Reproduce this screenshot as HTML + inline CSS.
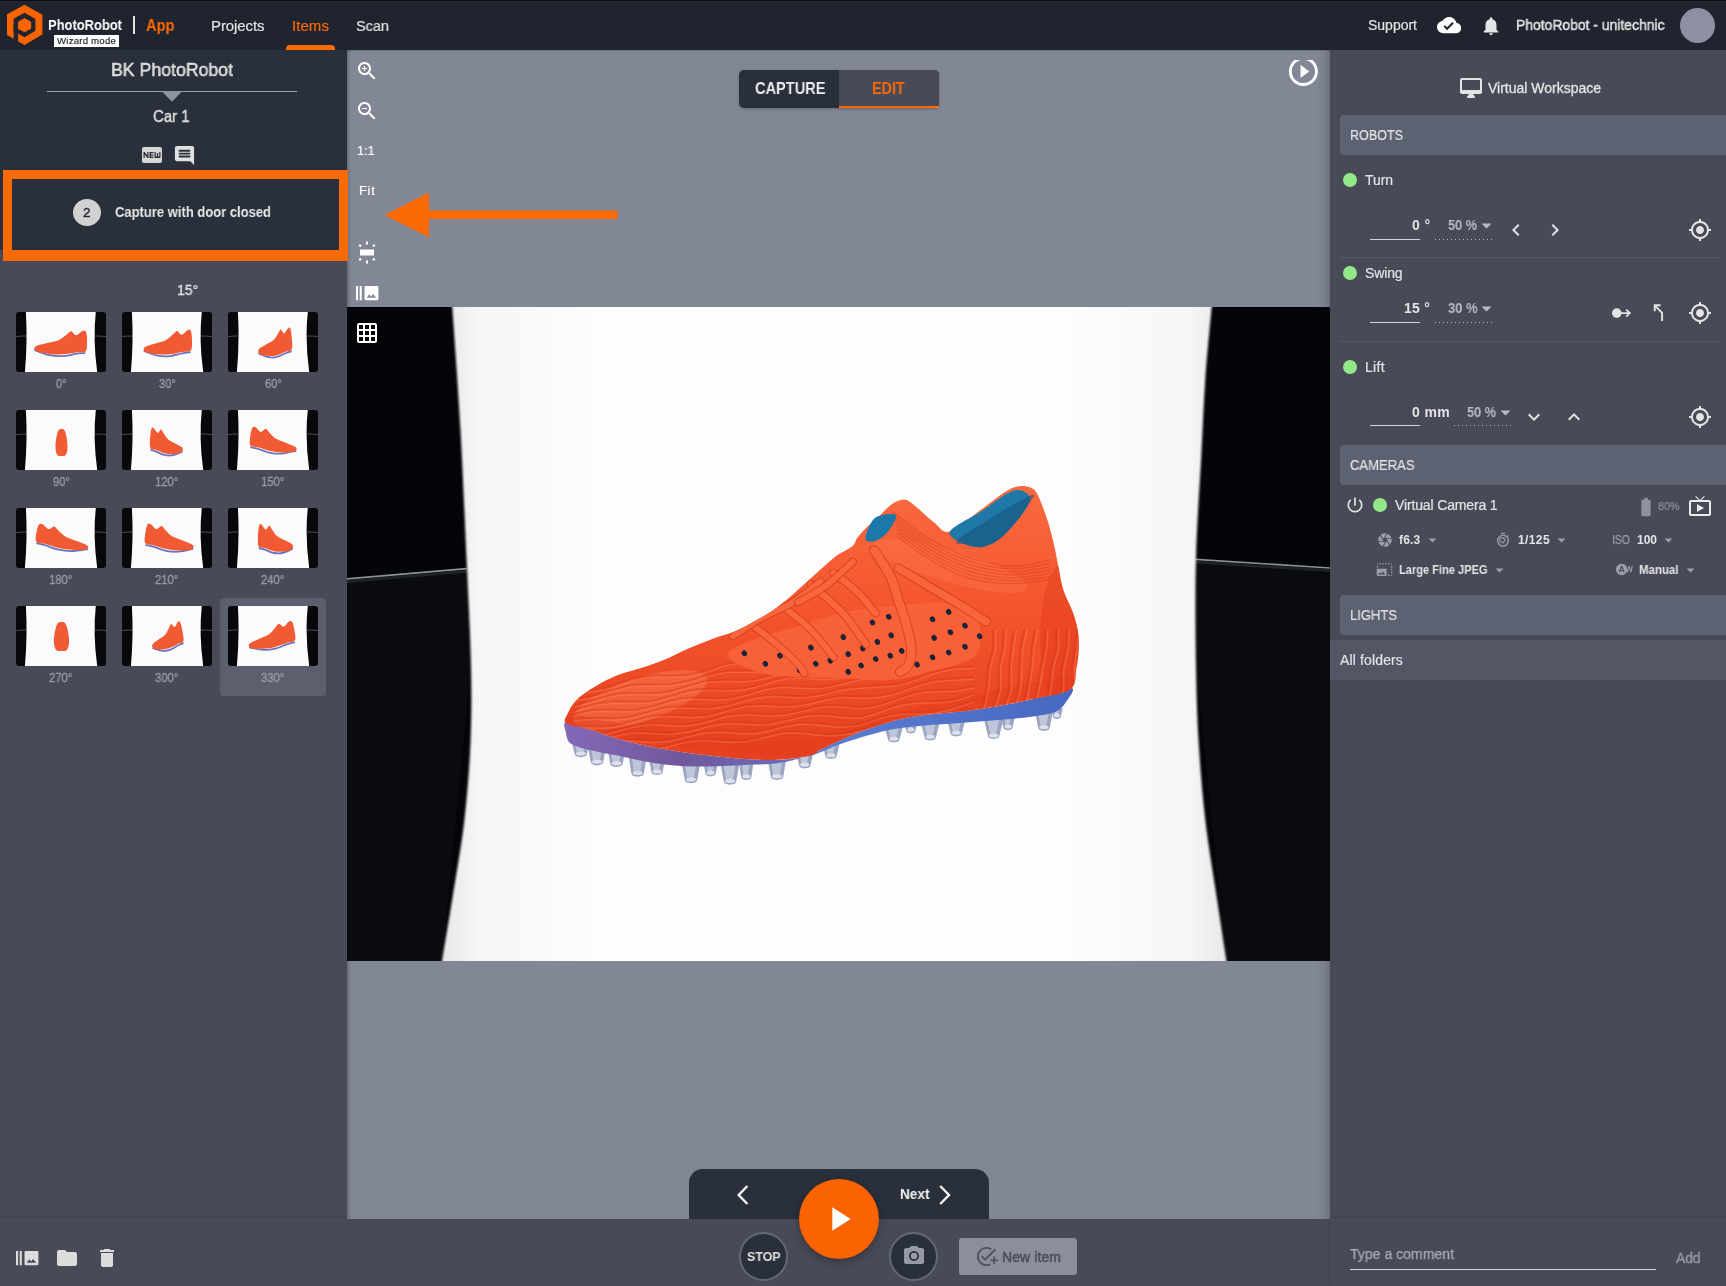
<!DOCTYPE html>
<html lang="en"><head><meta charset="utf-8"><title>PhotoRobot App - Wizard mode</title>
<style>
*{box-sizing:border-box;margin:0;padding:0}
html,body{width:1726px;height:1286px;overflow:hidden;background:#828796;font-family:"Liberation Sans",sans-serif}
body{position:relative}
.abs{position:absolute}
.t{position:absolute;white-space:nowrap;line-height:1;z-index:7;will-change:transform}
</style></head><body>
<!-- top navigation -->
<div class="abs" style="left:0;top:0;width:1726px;height:50px;background:#1f242e"></div>
<div class="abs" style="left:0;top:0;width:1726px;height:1px;background:#0b0d12"></div>
<svg class="abs" style="left:0;top:0" width="50" height="50" viewBox="0 0 50 50">
  <polygon fill="#fa6400" points="24.500,4.700 42.400,14.800 42.400,34.600 24.500,45.100 7,35 7,14.200"/>
  <polygon fill="#1f242e" points="24.500,12.800 35.400,19 35.400,30.700 24.500,37.300 13.600,31 13.600,18.700"/>
  <polygon fill="#1f242e" points="13.600,25 18.100,25 18.100,42.200 13.600,39.600"/>
  <polygon fill="#fa6400" points="24.500,17.900 31.100,21.800 31.100,28.800 24.500,32.300 18.100,29 18.100,21.800"/>
</svg>
<div class="abs" style="left:54px;top:35px;width:65px;height:12px;background:#fff"></div>
<div class="abs" style="left:133px;top:16px;width:2px;height:18px;background:#e4e4e4"></div>
<div class="abs" style="left:285.5px;top:45px;width:49px;height:5px;background:#ff6a00;border-radius:4px 4px 0 0"></div>
<svg class="abs" style="left:1436.90px;top:12.60px" width="24.2" height="24.2" viewBox="0 0 24 24" ><path fill="#ffffff" d="M19.35 10.04C18.67 6.59 15.64 4 12 4 9.11 4 6.6 5.64 5.35 8.04 2.34 8.36 0 10.91 0 14c0 3.31 2.69 6 6 6h13c2.76 0 5-2.24 5-5 0-2.64-2.05-4.78-4.65-4.96zM10 17l-3.5-3.5 1.41-1.41L10 14.17 15.18 9l1.41 1.41L10 17z"/></svg>
<svg class="abs" style="left:1479.50px;top:15.00px" width="22.0" height="22.0" viewBox="0 0 24 24" ><path fill="#e6e6e6" d="M12 22c1.1 0 2-.9 2-2h-4c0 1.1.89 2 2 2zm6-6v-5c0-3.07-1.64-5.64-4.5-6.32V4c0-.83-.67-1.5-1.5-1.5s-1.5.67-1.5 1.5v.68C7.63 5.36 6 7.92 6 11v5l-2 2v1h16v-1l-2-2z"/></svg>
<div class="abs" style="left:1679.500px;top:8px;width:35px;height:35px;border-radius:50%;background:#8d90a1"></div>

<!-- left panel -->
<div class="abs" style="left:0;top:50px;width:347px;height:1236px;background:#484a57"></div>
<div class="abs" style="left:0;top:50px;width:347px;height:200px;background:#2a303b"></div>
<div class="abs" style="left:47px;top:90.5px;width:250px;height:1.5px;background:#9ea3b0"></div>
<svg class="abs" style="left:160.800px;top:91px" width="22" height="12" viewBox="0 0 22 12"><polygon fill="#8e93a3" points="0.6,0 21.400,0 11,10.800"/></svg>
<svg class="abs" style="left:139.50px;top:143.00px" width="24.0" height="24.0" viewBox="0 0 24 24" ><path fill="#d8d8d8" d="M20 4H4c-1.110 0-1.990.89-1.990 2L2 18c0 1.110.89 2 2 2h16c1.110 0 2-.89 2-2V6c0-1.110-.89-2-2-2zM8.500 15H7.300l-2.550-3.500V15H3.500V9h1.250l2.500 3.500V9H8.500v6zm5-4.740H11v1.120h2.500v1.260H11v1.110h2.500V15h-4V9h4v1.260zm7 3.740c0 .55-.45 1-1 1h-4c-.55 0-1-.45-1-1V9h1.250v4.510h1.130V9.990h1.250v3.510h1.120V9h1.250v5z"/></svg>
<svg class="abs" style="left:172.50px;top:144.00px" width="23.0" height="23.0" viewBox="0 0 24 24" ><path fill="#e0e0e0" d="M21.990 4c0-1.100-.89-2-1.990-2H4c-1.100 0-2 .9-2 2v12c0 1.100.9 2 2 2h14l4 4-.010-18zM18 14H6v-2h12v2zm0-3H6V9h12v2zm0-3H6V6h12v2z"/></svg>
<!-- highlighted wizard step -->
<div class="abs" style="z-index:5;left:3.200px;top:169.500px;width:345px;height:91.900px;background:#2a303b;border:9.400px solid #fb6a05;border-top-width:9.300px;border-bottom-width:11.200px"></div>
<div class="abs" style="z-index:6;left:73px;top:198.500px;width:28px;height:27px;border-radius:50%;background:#d2d2d2"></div>
<!-- selected thumb highlight -->
<div class="abs" style="left:220px;top:598px;width:106px;height:98px;border-radius:4px;background:#5b5f6e"></div>
<svg class="abs" style="left:16px;top:312px;border-radius:3px" width="90" height="60" viewBox="0 0 90 60"><rect width="90" height="60" fill="#08080c"/><path fill="#fbfbfb" d="M9.900 0 Q11.600 30 8.900 60 L81.200 60 Q76.800 28 79.800 0Z"/><path d="M0 24.500 Q5 24 10.500 24 M79 24 Q85 24 90 24.500" stroke="#6a6d72" stroke-width=".7" fill="none"/><path d="M19.0 38.8C21.6 39.5 29.8 42.3 34.6 43.0C39.4 43.7 43.3 43.5 47.6 43.0C51.9 42.5 56.9 40.7 60.6 39.9C64.3 39.1 68.4 38.6 70.0 38.3" stroke="#6a74c0" stroke-width="1.800" fill="none" transform="rotate(4 45.0 30.0) translate(0 1)"/><path d="M19.0 38.8C18.6 37.9 18.8 36.8 20.6 35.7C22.3 34.7 25.8 33.8 29.4 32.6C33.0 31.4 38.9 30.2 42.4 28.4C45.9 26.7 48.2 23.8 50.2 22.2C52.2 20.6 52.8 18.6 54.4 18.6C55.9 18.6 57.7 22.4 59.6 22.2C61.5 22.0 64.2 18.1 65.8 17.5C67.4 16.9 68.6 16.7 69.4 18.6C70.3 20.4 70.9 25.5 71.0 28.7C71.1 31.9 71.7 36.0 70.0 37.8C68.2 39.6 64.3 38.6 60.6 39.4C56.9 40.1 51.9 41.7 47.6 42.2C43.3 42.8 38.7 42.9 34.6 42.7C30.5 42.6 25.8 42.1 23.2 41.4C20.6 40.8 19.4 39.8 19.0 38.8Z" fill="#f15a32" transform="rotate(4 45.0 30.0)"/></svg>
<svg class="abs" style="left:122px;top:312px;border-radius:3px" width="90" height="60" viewBox="0 0 90 60"><rect width="90" height="60" fill="#08080c"/><path fill="#fbfbfb" d="M9.900 0 Q11.600 30 8.900 60 L81.200 60 Q76.800 28 79.800 0Z"/><path d="M0 24.500 Q5 24 10.500 24 M79 24 Q85 24 90 24.500" stroke="#6a6d72" stroke-width=".7" fill="none"/><path d="M22.0 38.8C24.4 39.5 32.0 42.3 36.4 43.0C40.8 43.7 44.4 43.5 48.4 43.0C52.4 42.5 57.0 40.7 60.4 39.9C63.8 39.1 67.6 38.6 69.0 38.3" stroke="#6a74c0" stroke-width="1.800" fill="none" transform="rotate(2 46.0 30.0) translate(0 1)"/><path d="M22.0 38.8C21.6 37.9 21.8 36.8 23.4 35.7C25.0 34.7 28.2 33.8 31.6 32.6C35.0 31.4 40.4 30.2 43.6 28.4C46.8 26.7 49.0 23.8 50.8 22.2C52.6 20.6 53.2 18.6 54.6 18.6C56.1 18.6 57.7 22.4 59.4 22.2C61.2 22.0 63.7 18.1 65.2 17.5C66.7 16.9 67.8 16.7 68.6 18.6C69.4 20.4 69.9 25.5 70.0 28.7C70.1 31.9 70.6 36.0 69.0 37.8C67.4 39.6 63.8 38.6 60.4 39.4C57.0 40.1 52.4 41.7 48.4 42.2C44.4 42.8 40.2 42.9 36.4 42.7C32.6 42.6 28.2 42.1 25.8 41.4C23.4 40.8 22.4 39.8 22.0 38.8Z" fill="#f15a32" transform="rotate(2 46.0 30.0)"/></svg>
<svg class="abs" style="left:228px;top:312px;border-radius:3px" width="90" height="60" viewBox="0 0 90 60"><rect width="90" height="60" fill="#08080c"/><path fill="#fbfbfb" d="M9.900 0 Q11.600 30 8.900 60 L81.200 60 Q76.800 28 79.800 0Z"/><path d="M0 24.500 Q5 24 10.500 24 M79 24 Q85 24 90 24.500" stroke="#6a6d72" stroke-width=".7" fill="none"/><path d="M30.0 39.5C31.7 40.3 37.1 43.3 40.2 44.0C43.3 44.7 45.9 44.6 48.7 44.0C51.5 43.4 54.8 41.5 57.2 40.6C59.6 39.8 62.3 39.2 63.3 39.0" stroke="#6a74c0" stroke-width="1.800" fill="none" transform="rotate(-2 47.0 30.0) translate(0 1)"/><path d="M30.0 39.5C29.7 38.5 29.9 37.3 31.0 36.2C32.2 35.0 34.4 34.1 36.8 32.8C39.2 31.5 43.0 30.2 45.3 28.3C47.6 26.5 49.1 23.4 50.4 21.6C51.7 19.8 52.1 17.7 53.1 17.7C54.1 17.7 55.3 21.8 56.5 21.6C57.8 21.4 59.5 17.2 60.6 16.6C61.7 15.9 62.4 15.7 63.0 17.7C63.5 19.7 63.9 25.1 64.0 28.6C64.1 32.1 64.5 36.5 63.3 38.4C62.2 40.3 59.6 39.3 57.2 40.1C54.8 40.9 51.5 42.6 48.7 43.2C45.9 43.8 42.9 43.9 40.2 43.7C37.5 43.6 34.4 43.0 32.7 42.3C31.0 41.6 30.3 40.5 30.0 39.5Z" fill="#f15a32" transform="rotate(-2 47.0 30.0)"/></svg>
<svg class="abs" style="left:16px;top:410px;border-radius:3px" width="90" height="60" viewBox="0 0 90 60"><rect width="90" height="60" fill="#08080c"/><path fill="#fbfbfb" d="M9.900 0 Q11.600 30 8.900 60 L81.200 60 Q76.800 28 79.800 0Z"/><path d="M0 24.500 Q5 24 10.500 24 M79 24 Q85 24 90 24.500" stroke="#6a6d72" stroke-width=".7" fill="none"/><path d="M41.0 44.6C40.0 42.9 39.4 39.0 39.5 35.2C39.6 31.4 40.8 24.4 41.8 21.7C42.8 19.0 44.2 19.0 45.5 19.0C46.8 19.0 48.2 19.0 49.2 21.7C50.2 24.4 51.4 31.4 51.5 35.2C51.6 39.0 51.0 42.9 50.0 44.6C49.0 46.4 47.0 46.0 45.5 46.0C44.0 46.0 42.0 46.4 41.0 44.6Z" fill="#f15a32" transform="rotate(0 45.5 32.5)"/></svg>
<svg class="abs" style="left:122px;top:410px;border-radius:3px" width="90" height="60" viewBox="0 0 90 60"><rect width="90" height="60" fill="#08080c"/><path fill="#fbfbfb" d="M9.900 0 Q11.600 30 8.900 60 L81.200 60 Q76.800 28 79.800 0Z"/><path d="M0 24.500 Q5 24 10.500 24 M79 24 Q85 24 90 24.500" stroke="#6a6d72" stroke-width=".7" fill="none"/><path d="M61.0 39.8C59.4 40.5 54.1 43.3 51.1 44.0C48.1 44.7 45.6 44.5 42.8 44.0C40.1 43.5 37.0 41.7 34.6 40.9C32.2 40.1 29.7 39.6 28.7 39.3" stroke="#6a74c0" stroke-width="1.800" fill="none" transform="rotate(2 44.5 31.0) translate(0 1)"/><path d="M61.0 39.8C61.3 38.9 61.1 37.8 60.0 36.7C58.9 35.7 56.7 34.8 54.4 33.6C52.1 32.4 48.3 31.2 46.1 29.4C44.0 27.7 42.5 24.8 41.2 23.2C39.9 21.6 39.6 19.6 38.6 19.6C37.6 19.6 36.5 23.4 35.3 23.2C34.0 23.0 32.3 19.1 31.3 18.5C30.3 17.9 29.5 17.7 29.0 19.6C28.4 21.4 28.1 26.5 28.0 29.7C27.9 32.9 27.6 37.0 28.7 38.8C29.8 40.6 32.2 39.6 34.6 40.4C37.0 41.1 40.1 42.7 42.8 43.2C45.6 43.8 48.5 43.9 51.1 43.7C53.7 43.6 56.7 43.1 58.4 42.4C60.0 41.8 60.7 40.8 61.0 39.8Z" fill="#f15a32" transform="rotate(2 44.5 31.0)"/></svg>
<svg class="abs" style="left:228px;top:410px;border-radius:3px" width="90" height="60" viewBox="0 0 90 60"><rect width="90" height="60" fill="#08080c"/><path fill="#fbfbfb" d="M9.900 0 Q11.600 30 8.900 60 L81.200 60 Q76.800 28 79.800 0Z"/><path d="M0 24.500 Q5 24 10.500 24 M79 24 Q85 24 90 24.500" stroke="#6a6d72" stroke-width=".7" fill="none"/><path d="M69.0 38.2C66.7 38.8 59.2 41.4 54.9 42.0C50.6 42.6 47.1 42.5 43.1 42.0C39.2 41.5 34.8 39.8 31.4 39.1C28.0 38.4 24.3 37.9 22.9 37.7" stroke="#6a74c0" stroke-width="1.800" fill="none" transform="rotate(4 45.5 30.0) translate(0 1)"/><path d="M69.0 38.2C69.4 37.3 69.2 36.2 67.6 35.3C66.0 34.3 62.9 33.5 59.6 32.4C56.3 31.3 51.0 30.2 47.8 28.6C44.7 27.0 42.6 24.3 40.8 22.8C39.0 21.3 38.5 19.4 37.0 19.4C35.6 19.4 34.1 23.0 32.3 22.8C30.6 22.6 28.2 19.0 26.7 18.5C25.2 17.9 24.2 17.7 23.4 19.4C22.6 21.2 22.1 25.8 22.0 28.8C21.9 31.8 21.4 35.6 22.9 37.2C24.5 38.8 28.0 38.0 31.4 38.6C34.8 39.3 39.2 40.8 43.1 41.3C47.1 41.8 51.2 41.9 54.9 41.8C58.6 41.6 62.9 41.2 65.2 40.6C67.6 40.0 68.6 39.0 69.0 38.2Z" fill="#f15a32" transform="rotate(4 45.5 30.0)"/></svg>
<svg class="abs" style="left:16px;top:508px;border-radius:3px" width="90" height="60" viewBox="0 0 90 60"><rect width="90" height="60" fill="#08080c"/><path fill="#fbfbfb" d="M9.900 0 Q11.600 30 8.900 60 L81.200 60 Q76.800 28 79.800 0Z"/><path d="M0 24.500 Q5 24 10.500 24 M79 24 Q85 24 90 24.500" stroke="#6a6d72" stroke-width=".7" fill="none"/><path d="M73.0 37.3C70.3 37.9 62.0 40.4 57.1 41.0C52.2 41.6 48.3 41.5 43.8 41.0C39.4 40.5 34.4 38.9 30.6 38.2C26.8 37.5 22.7 37.1 21.1 36.9" stroke="#6a74c0" stroke-width="1.800" fill="none" transform="rotate(6 46.5 29.5) translate(0 1)"/><path d="M73.0 37.3C73.4 36.5 73.2 35.5 71.4 34.6C69.6 33.6 66.1 32.9 62.4 31.8C58.7 30.7 52.7 29.7 49.1 28.1C45.6 26.6 43.2 24.1 41.2 22.6C39.2 21.1 38.6 19.4 37.0 19.4C35.4 19.4 33.6 22.8 31.7 22.6C29.7 22.4 27.0 19.0 25.3 18.5C23.6 17.9 22.5 17.7 21.6 19.4C20.7 21.0 20.1 25.5 20.0 28.4C19.9 31.2 19.3 34.8 21.1 36.4C22.8 38.0 26.8 37.1 30.6 37.8C34.4 38.4 39.4 39.8 43.8 40.3C48.3 40.8 52.9 40.9 57.1 40.8C61.3 40.7 66.1 40.2 68.8 39.6C71.4 39.0 72.6 38.2 73.0 37.3Z" fill="#f15a32" transform="rotate(6 46.5 29.5)"/></svg>
<svg class="abs" style="left:122px;top:508px;border-radius:3px" width="90" height="60" viewBox="0 0 90 60"><rect width="90" height="60" fill="#08080c"/><path fill="#fbfbfb" d="M9.900 0 Q11.600 30 8.900 60 L81.200 60 Q76.800 28 79.800 0Z"/><path d="M0 24.500 Q5 24 10.500 24 M79 24 Q85 24 90 24.500" stroke="#6a6d72" stroke-width=".7" fill="none"/><path d="M72.0 38.0C69.5 38.7 61.8 41.3 57.3 42.0C52.8 42.7 49.1 42.5 45.0 42.0C41.0 41.5 36.3 39.8 32.8 39.0C29.3 38.2 25.5 37.8 24.0 37.5" stroke="#6a74c0" stroke-width="1.800" fill="none" transform="rotate(4 47.5 29.5) translate(0 1)"/><path d="M72.0 38.0C72.4 37.1 72.2 36.0 70.5 35.0C68.9 34.0 65.6 33.2 62.2 32.0C58.8 30.8 53.2 29.7 50.0 28.0C46.7 26.3 44.5 23.6 42.6 22.0C40.7 20.4 40.1 18.5 38.7 18.5C37.2 18.5 35.6 22.2 33.8 22.0C32.0 21.8 29.5 18.1 27.9 17.5C26.3 16.9 25.3 16.7 24.5 18.5C23.7 20.3 23.1 25.2 23.0 28.2C22.9 31.3 22.3 35.3 24.0 37.0C25.6 38.7 29.3 37.8 32.8 38.5C36.3 39.2 41.0 40.7 45.0 41.2C49.1 41.8 53.5 41.9 57.3 41.8C61.1 41.6 65.6 41.1 68.1 40.5C70.5 39.9 71.6 38.9 72.0 38.0Z" fill="#f15a32" transform="rotate(4 47.5 29.5)"/></svg>
<svg class="abs" style="left:228px;top:508px;border-radius:3px" width="90" height="60" viewBox="0 0 90 60"><rect width="90" height="60" fill="#08080c"/><path fill="#fbfbfb" d="M9.900 0 Q11.600 30 8.900 60 L81.200 60 Q76.800 28 79.800 0Z"/><path d="M0 24.500 Q5 24 10.500 24 M79 24 Q85 24 90 24.500" stroke="#6a6d72" stroke-width=".7" fill="none"/><path d="M65.0 39.5C63.2 40.3 57.7 43.3 54.5 44.0C51.3 44.7 48.7 44.6 45.8 44.0C42.8 43.4 39.5 41.5 37.0 40.6C34.5 39.8 31.8 39.2 30.7 39.0" stroke="#6a74c0" stroke-width="1.800" fill="none" transform="rotate(0 47.5 30.0) translate(0 1)"/><path d="M65.0 39.5C65.3 38.5 65.1 37.3 64.0 36.2C62.8 35.0 60.5 34.1 58.0 32.8C55.5 31.5 51.6 30.2 49.2 28.3C46.9 26.5 45.3 23.4 44.0 21.6C42.7 19.8 42.2 17.7 41.2 17.7C40.2 17.7 39.0 21.8 37.7 21.6C36.4 21.4 34.6 17.2 33.5 16.6C32.4 15.9 31.6 15.7 31.1 17.7C30.5 19.7 30.1 25.1 30.0 28.6C29.9 32.1 29.5 36.5 30.7 38.4C31.9 40.3 34.5 39.3 37.0 40.1C39.5 40.9 42.8 42.6 45.8 43.2C48.7 43.8 51.8 43.9 54.5 43.7C57.2 43.6 60.5 43.0 62.2 42.3C64.0 41.6 64.7 40.5 65.0 39.5Z" fill="#f15a32" transform="rotate(0 47.5 30.0)"/></svg>
<svg class="abs" style="left:16px;top:606px;border-radius:3px" width="90" height="60" viewBox="0 0 90 60"><rect width="90" height="60" fill="#08080c"/><path fill="#fbfbfb" d="M9.900 0 Q11.600 30 8.900 60 L81.200 60 Q76.800 28 79.800 0Z"/><path d="M0 24.500 Q5 24 10.500 24 M79 24 Q85 24 90 24.500" stroke="#6a6d72" stroke-width=".7" fill="none"/><path d="M39.8 43.5C38.5 41.6 37.7 37.5 37.9 33.4C38.1 29.3 39.5 21.8 40.8 18.9C42.0 16.0 43.9 16.0 45.5 16.0C47.1 16.0 49.0 16.0 50.2 18.9C51.5 21.8 52.9 29.3 53.1 33.4C53.3 37.5 52.5 41.6 51.2 43.5C49.9 45.5 47.4 45.0 45.5 45.0C43.6 45.0 41.1 45.5 39.8 43.5Z" fill="#f15a32" transform="rotate(0 45.5 30.5)"/></svg>
<svg class="abs" style="left:122px;top:606px;border-radius:3px" width="90" height="60" viewBox="0 0 90 60"><rect width="90" height="60" fill="#08080c"/><path fill="#fbfbfb" d="M9.900 0 Q11.600 30 8.900 60 L81.200 60 Q76.800 28 79.800 0Z"/><path d="M0 24.500 Q5 24 10.500 24 M79 24 Q85 24 90 24.500" stroke="#6a6d72" stroke-width=".7" fill="none"/><path d="M29.0 38.8C30.6 39.5 35.7 42.3 38.6 43.0C41.5 43.7 43.9 43.5 46.6 43.0C49.3 42.5 52.3 40.7 54.6 39.9C56.9 39.1 59.4 38.6 60.4 38.3" stroke="#6a74c0" stroke-width="1.800" fill="none" transform="rotate(-8 45.0 30.0) translate(0 1)"/><path d="M29.0 38.8C28.7 37.9 28.9 36.8 30.0 35.7C31.0 34.7 33.2 33.8 35.4 32.6C37.6 31.4 41.3 30.2 43.4 28.4C45.5 26.7 47.0 23.8 48.2 22.2C49.4 20.6 49.8 18.6 50.8 18.6C51.7 18.6 52.8 22.4 54.0 22.2C55.1 22.0 56.8 18.1 57.8 17.5C58.8 16.9 59.5 16.7 60.0 18.6C60.6 20.4 60.9 25.5 61.0 28.7C61.1 31.9 61.4 36.0 60.4 37.8C59.3 39.6 56.9 38.6 54.6 39.4C52.3 40.1 49.3 41.7 46.6 42.2C43.9 42.8 41.1 42.9 38.6 42.7C36.1 42.6 33.2 42.1 31.6 41.4C30.0 40.8 29.3 39.8 29.0 38.8Z" fill="#f15a32" transform="rotate(-8 45.0 30.0)"/></svg>
<svg class="abs" style="left:228px;top:606px;border-radius:3px" width="90" height="60" viewBox="0 0 90 60"><rect width="90" height="60" fill="#08080c"/><path fill="#fbfbfb" d="M9.900 0 Q11.600 30 8.900 60 L81.200 60 Q76.800 28 79.800 0Z"/><path d="M0 24.500 Q5 24 10.500 24 M79 24 Q85 24 90 24.500" stroke="#6a6d72" stroke-width=".7" fill="none"/><path d="M20.0 38.0C22.4 38.7 29.8 41.3 34.1 42.0C38.4 42.7 41.9 42.5 45.9 42.0C49.8 41.5 54.2 39.8 57.6 39.0C61.0 38.2 64.7 37.8 66.1 37.5" stroke="#6a74c0" stroke-width="1.800" fill="none" transform="rotate(-6 43.5 29.5) translate(0 1)"/><path d="M20.0 38.0C19.6 37.1 19.8 36.0 21.4 35.0C23.0 34.0 26.1 33.2 29.4 32.0C32.7 30.8 38.0 29.7 41.2 28.0C44.3 26.3 46.4 23.6 48.2 22.0C50.0 20.4 50.5 18.5 52.0 18.5C53.4 18.5 54.9 22.2 56.7 22.0C58.4 21.8 60.8 18.1 62.3 17.5C63.8 16.9 64.8 16.7 65.6 18.5C66.4 20.3 66.9 25.2 67.0 28.2C67.1 31.3 67.6 35.3 66.1 37.0C64.5 38.7 61.0 37.8 57.6 38.5C54.2 39.2 49.8 40.7 45.9 41.2C41.9 41.8 37.8 41.9 34.1 41.8C30.4 41.6 26.1 41.1 23.8 40.5C21.4 39.9 20.4 38.9 20.0 38.0Z" fill="#f15a32" transform="rotate(-6 43.5 29.5)"/></svg>

<!-- left bottom bar -->
<div class="abs" style="left:0;top:1218px;width:347px;height:68px;background:#484a57;box-shadow:0 -1px 3px rgba(0,0,0,.18)"></div>
<svg class="abs" style="left:15.00px;top:1246.00px" width="24.0" height="24.0" viewBox="0 0 24 24" ><path fill="#dcdcdc" d="M1 4.900h2.100v14.300H1zM4.700 4.900h2.100v14.300H4.700zM22.200 4.900H10.700c-.7 0-1.200.5-1.200 1.200V18c0 .7.5 1.200 1.200 1.200h11.500c.7 0 1.200-.5 1.200-1.200V6.100c0-.7-.5-1.200-1.200-1.200zM11.700 16.700l2.600-3.400 1.800 2.200 2-2.600 3.200 3.800z"/></svg>
<svg class="abs" style="left:55.00px;top:1246.00px" width="24.0" height="24.0" viewBox="0 0 24 24" ><path fill="#dcdcdc" d="M10 4H4c-1.100 0-1.990.9-1.990 2L2 18c0 1.100.9 2 2 2h16c1.100 0 2-.9 2-2V8c0-1.100-.9-2-2-2h-8l-2-2z"/></svg>
<svg class="abs" style="left:95.00px;top:1246.00px" width="24.0" height="24.0" viewBox="0 0 24 24" ><path fill="#dcdcdc" d="M6 19c0 1.100.9 2 2 2h8c1.100 0 2-.9 2-2V7H6v12zM19 4h-3.500l-1-1h-5l-1 1H5v2h14V4z"/></svg>

<!-- center viewer -->
<div class="abs" style="left:347px;top:50px;width:983px;height:1169px;background:#828796"></div>
<svg class="abs" style="left:354.90px;top:58.90px" width="24.0" height="24.0" viewBox="0 0 24 24" ><path fill="#ffffff" d="M15.5 14h-.79l-.28-.27C15.41 12.59 16 11.11 16 9.5 16 5.91 13.09 3 9.5 3S3 5.91 3 9.5 5.91 16 9.5 16c1.61 0 3.09-.59 4.23-1.57l.27.28v.79l5 4.99L20.49 19l-4.99-5zm-6 0C7.01 14 5 11.99 5 9.5S7.01 5 9.5 5 14 7.01 14 9.5 11.99 14 9.5 14zM12 10h-2v2H9v-2H7V9h2V7h1v2h2v1z"/></svg>
<svg class="abs" style="left:354.90px;top:98.50px" width="24.0" height="24.0" viewBox="0 0 24 24" ><path fill="#ffffff" d="M15.5 14h-.79l-.28-.27C15.41 12.59 16 11.11 16 9.5 16 5.91 13.09 3 9.5 3S3 5.91 3 9.5 5.91 16 9.5 16c1.61 0 3.09-.59 4.23-1.57l.27.28v.79l5 4.99L20.49 19l-4.99-5zm-6 0C7.01 14 5 11.99 5 9.5S7.01 5 9.5 5 14 7.01 14 9.5 11.99 14 9.5 14zM7 9h5v1H7z"/></svg>
<svg class="abs" style="left:355.30px;top:241.00px" width="24.0" height="24.0" viewBox="0 0 24 24" ><path fill="#ffffff" d="M5 14.500h14v-6H5v6zM11 .55V3.500h2V.55h-2zm8.040 2.500l-1.790 1.790 1.410 1.410 1.800-1.790-1.420-1.410zM13 22.450V19.500h-2v2.950h2zm7.450-3.910l-1.800-1.790-1.410 1.410 1.790 1.800 1.420-1.420zM3.550 4.460l1.790 1.790 1.410-1.410-1.790-1.790-1.410 1.410zm1.410 15.490l1.790-1.800-1.410-1.410-1.790 1.790 1.410 1.420z"/></svg>
<svg class="abs" style="left:355.00px;top:281.00px" width="24.0" height="24.0" viewBox="0 0 24 24" ><path fill="#ffffff" d="M1 4.900h2.100v14.300H1zM4.700 4.900h2.100v14.300H4.700zM22.200 4.900H10.700c-.7 0-1.200.5-1.200 1.200V18c0 .7.5 1.200 1.200 1.200h11.500c.7 0 1.200-.5 1.200-1.200V6.100c0-.7-.5-1.200-1.200-1.200zM11.700 16.700l2.600-3.400 1.800 2.200 2-2.600 3.200 3.800z"/></svg>
<div class="abs" style="left:1280px;top:60px;width:50px;height:40px;overflow:hidden"><svg class="abs" style="left:6.400px;top:-6.400px" width="34.800" height="34.800" viewBox="0 0 24 24"><path fill="#ffffff" d="M10 16.500l6-4.500-6-4.500v9zM12 2C6.480 2 2 6.480 2 12s4.480 10 10 10 10-4.480 10-10S17.520 2 12 2zm0 18c-4.410 0-8-3.590-8-8s3.590-8 8-8 8 3.590 8 8-3.590 8-8 8z"/></svg></div>
<div class="abs" style="left:347px;top:50px;width:4px;height:1169px;background:linear-gradient(90deg,rgba(40,42,55,.28),rgba(40,42,55,0))"></div>
<div class="abs" style="left:1316px;top:50px;width:14px;height:1169px;background:linear-gradient(270deg,rgba(40,42,55,.26),rgba(40,42,55,.08) 40%,rgba(40,42,55,0))"></div>
<div class="abs" style="left:347px;top:50px;width:983px;height:2px;background:linear-gradient(180deg,rgba(30,32,45,.22),rgba(30,32,45,0))"></div>
<!-- pointer arrow -->
<svg class="abs" style="left:380px;top:188px" width="244" height="54" viewBox="380 188 244 54"><polygon fill="#fb6a05" points="384.500,215 429,192.600 429,210.600 617.500,210.600 617.500,218.900 429,218.900 429,237.400"/></svg>
<!-- capture / edit toggle -->
<div class="abs" style="left:739px;top:70px;width:200px;height:37.500px;border-radius:5px;background:#2a303b;box-shadow:0 1px 3px rgba(0,0,0,.25)"></div>
<div class="abs" style="left:839px;top:70px;width:100px;height:37.500px;border-radius:0 5px 0 0;background:#484a57;border-bottom:2.300px solid #ff6a00"></div>

<!-- main photo -->
<svg class="abs" style="left:347px;top:307px" width="983" height="654" viewBox="347 307 983 654">
<defs>
<linearGradient id="og" x1="0" y1="0" x2="0" y2="1"><stop offset="0" stop-color="#fb6a3f"/><stop offset=".5" stop-color="#f3532b"/><stop offset="1" stop-color="#e5401f"/></linearGradient>
<linearGradient id="pg" x1="0" y1="0" x2="1" y2="0"><stop offset="0" stop-color="#8468b8"/><stop offset=".5" stop-color="#71589c"/><stop offset="1" stop-color="#6670bd"/></linearGradient>
<linearGradient id="bg2" x1="0" y1="0" x2="1" y2="0"><stop offset="0" stop-color="#5d7fd0"/><stop offset="1" stop-color="#4767c2"/></linearGradient>
<linearGradient id="wl" x1="0" y1="0" x2="1" y2="0"><stop offset="0" stop-color="#e6e6e6"/><stop offset=".05" stop-color="#f6f6f6"/><stop offset=".2" stop-color="#fdfdfd"/><stop offset=".8" stop-color="#fdfdfd"/><stop offset=".95" stop-color="#f6f6f6"/><stop offset="1" stop-color="#e6e6e6"/></linearGradient>
<filter id="bl" x="-5%" y="-5%" width="110%" height="110%"><feGaussianBlur stdDeviation="1.1"/></filter>
<clipPath id="uc"><path d="M566.2 723.3C562.4 720.6 566.2 717.4 567.8 713.6C569.4 709.8 572.2 704.7 576.0 700.6C579.8 696.5 584.1 693.3 590.6 689.2C597.1 685.1 606.5 679.7 614.9 676.2C623.3 672.7 632.8 670.8 640.9 668.1C649.0 665.4 655.8 663.2 663.6 660.0C671.4 656.8 679.8 652.2 687.9 648.7C696.0 645.2 704.1 641.9 712.2 638.9C720.3 635.9 728.5 634.3 736.6 630.8C744.7 627.3 753.6 622.1 760.9 617.8C768.2 613.5 773.9 609.9 780.4 604.9C786.9 599.9 793.4 593.8 800.0 588.0C806.6 582.2 814.0 575.3 820.0 570.0C826.0 564.7 830.8 560.0 836.2 556.0C841.6 552.0 848.9 549.2 852.4 546.2C855.9 543.2 855.0 541.0 857.3 538.0C859.6 535.0 862.8 531.2 866.0 528.0C869.2 524.8 872.8 522.4 876.8 518.7C880.8 515.0 885.8 508.8 889.8 505.7C893.8 502.6 897.5 500.6 901.0 500.0C904.5 499.4 905.4 498.7 910.8 502.4C916.2 506.1 927.1 517.1 933.6 522.0C940.1 526.9 941.7 533.8 949.8 531.6C957.9 529.4 972.5 515.8 982.0 509.0C991.5 502.2 1000.3 494.8 1006.6 491.0C1012.9 487.2 1015.5 486.7 1019.6 486.2C1023.7 485.7 1027.9 486.4 1030.9 487.8C1033.9 489.2 1034.7 489.1 1037.4 494.3C1040.1 499.5 1044.3 510.6 1047.0 518.7C1049.7 526.8 1051.7 534.9 1053.6 543.0C1055.5 551.1 1056.9 559.5 1058.5 567.3C1060.1 575.1 1060.9 582.4 1063.3 590.0C1065.7 597.6 1070.5 605.8 1073.0 612.8C1075.5 619.8 1077.0 626.2 1078.0 632.2C1079.0 638.2 1079.1 642.4 1078.8 648.5C1078.5 654.6 1077.8 661.8 1076.3 668.7C1074.8 675.6 1077.3 684.7 1069.8 689.8C1062.2 694.9 1042.9 696.8 1031.0 699.5C1019.1 702.2 1009.3 704.1 998.5 706.0C987.7 707.9 976.8 709.6 966.0 710.9C955.2 712.2 944.4 712.6 933.6 714.0C922.8 715.4 911.8 716.5 901.0 719.0C890.2 721.5 878.2 725.5 868.7 728.7C859.2 731.9 852.4 734.9 844.3 738.4C836.2 741.9 825.8 746.9 820.0 749.8C814.2 752.7 816.8 754.0 809.6 755.7C802.5 757.4 787.9 759.2 777.1 759.8C766.3 760.3 755.5 759.7 744.7 759.0C733.9 758.3 723.0 756.9 712.2 755.7C701.4 754.5 690.6 753.3 679.8 751.7C669.0 750.1 658.1 748.3 647.3 746.0C636.5 743.7 624.3 740.6 614.9 737.9C605.5 735.2 598.7 732.2 590.6 729.8C582.5 727.4 570.0 726.0 566.2 723.3Z"/></clipPath>
</defs>
<rect x="347" y="307" width="983" height="654" fill="#040508"/>
<path d="M347 961V580L466 570L471 665L442 961Z" fill="#090b0f"/>
<path d="M1330 961V570L1196 561L1196 665L1226 961Z" fill="#090b0f"/>
<path d="M347 578.900L466.500 568.600" stroke="#8a9296" stroke-width="1.700" fill="none"/>
<path d="M347 581.500L466.500 571.200" stroke="#2c3236" stroke-width="3" fill="none" opacity=".6"/>
<path d="M1195.500 559.300L1330 568" stroke="#8a9296" stroke-width="1.700" fill="none"/>
<path d="M1195.500 562L1330 570.600" stroke="#2c3236" stroke-width="3" fill="none" opacity=".6"/>
<path fill="url(#wl)" filter="url(#bl)" d="M450.5 280.0C450.8 284.5 450.6 282.0 452.3 307.0C454.0 332.0 458.1 386.8 460.5 430.0C462.9 473.2 465.1 526.8 466.9 566.0C468.6 605.2 470.4 635.5 471.0 665.0C471.6 694.5 471.6 717.0 470.5 743.0C469.4 769.0 467.3 795.0 464.3 821.0C461.3 847.0 456.0 875.7 452.3 899.0C448.6 922.3 444.3 946.7 442.0 961.0C439.7 975.3 439.1 981.0 438.5 985.0L1230.0 985.0C1229.4 981.0 1228.7 975.3 1226.5 961.0C1224.3 946.7 1220.5 922.3 1217.0 899.0C1213.5 875.7 1208.5 847.0 1205.4 821.0C1202.4 795.0 1200.3 769.0 1198.7 743.0C1197.1 717.0 1196.5 695.8 1196.0 665.0C1195.5 634.2 1195.1 592.8 1196.0 558.0C1196.9 523.2 1199.7 486.0 1201.3 456.0C1202.9 426.0 1203.7 402.8 1205.4 378.0C1207.1 353.2 1210.3 323.3 1211.7 307.0C1213.1 290.7 1213.6 284.5 1214.0 280.0Z"/>
<path d="M571.5 740.0L590.0 740.0L587.0 753.7Q587.0 756.7 580.8 757.2Q574.5 756.7 574.5 753.7Z" fill="#9ba4c0"/>
<path d="M574.5 740.0L586.0 740.0L583.5 752.7L577.0 752.7Z" fill="#bfc6da"/>
<ellipse cx="580.8" cy="753.5" rx="5.0" ry="2" fill="#dde1ec"/>
<path d="M587.8 746.0L606.2 746.0L603.2 761.9Q603.2 764.9 597.0 765.4Q590.8 764.9 590.8 761.9Z" fill="#9ba4c0"/>
<path d="M590.8 746.0L602.2 746.0L599.8 760.9L593.2 760.9Z" fill="#bfc6da"/>
<ellipse cx="597.0" cy="761.7" rx="5.0" ry="2" fill="#dde1ec"/>
<path d="M607.8 750.0L625.2 750.0L622.8 763.5Q622.8 766.5 616.5 767.0Q610.2 766.5 610.2 763.5Z" fill="#9ba4c0"/>
<path d="M610.8 750.0L621.2 750.0L619.2 762.5L612.8 762.5Z" fill="#bfc6da"/>
<ellipse cx="616.5" cy="763.3" rx="5.0" ry="2" fill="#dde1ec"/>
<path d="M628.4 755.0L646.9 755.0L643.9 773.2Q643.9 776.2 637.6 776.7Q631.4 776.2 631.4 773.2Z" fill="#9ba4c0"/>
<path d="M631.4 755.0L642.9 755.0L640.4 772.2L633.9 772.2Z" fill="#bfc6da"/>
<ellipse cx="637.6" cy="773.0" rx="5.0" ry="2" fill="#dde1ec"/>
<path d="M648.8 757.0L665.2 757.0L662.8 771.6Q662.8 774.6 657.0 775.1Q651.2 774.6 651.2 771.6Z" fill="#9ba4c0"/>
<path d="M651.8 757.0L661.2 757.0L659.2 770.6L653.8 770.6Z" fill="#bfc6da"/>
<ellipse cx="657.0" cy="771.4" rx="4.5" ry="2" fill="#dde1ec"/>
<path d="M681.2 761.0L700.8 761.0L697.2 779.7Q697.2 782.7 691.0 783.2Q684.8 782.7 684.8 779.7Z" fill="#9ba4c0"/>
<path d="M684.2 761.0L696.8 761.0L693.8 778.7L687.2 778.7Z" fill="#bfc6da"/>
<ellipse cx="691.0" cy="779.5" rx="5.0" ry="2" fill="#dde1ec"/>
<path d="M703.4 762.0L717.9 762.0L715.9 773.0Q715.9 776.0 710.6 776.5Q705.4 776.0 705.4 773.0Z" fill="#9ba4c0"/>
<path d="M706.4 762.0L713.9 762.0L712.4 772.0L707.9 772.0Z" fill="#bfc6da"/>
<ellipse cx="710.6" cy="772.8" rx="4.0" ry="2" fill="#dde1ec"/>
<path d="M720.2 762.0L739.8 762.0L736.2 781.3Q736.2 784.3 730.0 784.8Q723.8 784.3 723.8 781.3Z" fill="#9ba4c0"/>
<path d="M723.2 762.0L735.8 762.0L732.8 780.3L726.2 780.3Z" fill="#bfc6da"/>
<ellipse cx="730.0" cy="781.1" rx="5.0" ry="2" fill="#dde1ec"/>
<path d="M739.0 762.0L753.5 762.0L751.5 776.5Q751.5 779.5 746.3 780.0Q741.0 779.5 741.0 776.5Z" fill="#9ba4c0"/>
<path d="M742.0 762.0L749.5 762.0L748.0 775.5L743.5 775.5Z" fill="#bfc6da"/>
<ellipse cx="746.3" cy="776.3" rx="4.0" ry="2" fill="#dde1ec"/>
<path d="M767.8 760.0L786.2 760.0L783.2 776.5Q783.2 779.5 777.0 780.0Q770.8 779.5 770.8 776.5Z" fill="#9ba4c0"/>
<path d="M770.8 760.0L782.2 760.0L779.8 775.5L773.2 775.5Z" fill="#bfc6da"/>
<ellipse cx="777.0" cy="776.3" rx="5.0" ry="2" fill="#dde1ec"/>
<path d="M796.5 754.0L813.0 754.0L810.5 765.0Q810.5 768.0 804.7 768.5Q799.0 768.0 799.0 765.0Z" fill="#9ba4c0"/>
<path d="M799.5 754.0L809.0 754.0L807.0 764.0L801.5 764.0Z" fill="#bfc6da"/>
<ellipse cx="804.7" cy="764.8" rx="4.5" ry="2" fill="#dde1ec"/>
<path d="M822.8 745.0L839.2 745.0L836.8 755.5Q836.8 758.5 831.0 759.0Q825.2 758.5 825.2 755.5Z" fill="#9ba4c0"/>
<path d="M825.8 745.0L835.2 745.0L833.2 754.5L827.8 754.5Z" fill="#bfc6da"/>
<ellipse cx="831.0" cy="755.3" rx="4.5" ry="2" fill="#dde1ec"/>
<path d="M884.5 727.0L903.0 727.0L899.5 739.0Q899.5 742.0 893.8 742.5Q888.0 742.0 888.0 739.0Z" fill="#9ba4c0"/>
<path d="M887.5 727.0L899.0 727.0L896.0 738.0L890.5 738.0Z" fill="#bfc6da"/>
<ellipse cx="893.8" cy="738.8" rx="4.5" ry="2" fill="#dde1ec"/>
<path d="M904.6 724.5L917.1 724.5L915.6 730.0Q915.6 733.0 910.9 733.5Q906.1 733.0 906.1 730.0Z" fill="#9ba4c0"/>
<path d="M907.6 724.5L913.1 724.5L912.1 729.0L908.6 729.0Z" fill="#bfc6da"/>
<ellipse cx="910.9" cy="729.8" rx="3.5" ry="2" fill="#dde1ec"/>
<path d="M921.0 723.0L939.5 723.0L936.0 737.0Q936.0 740.0 930.3 740.5Q924.5 740.0 924.5 737.0Z" fill="#9ba4c0"/>
<path d="M924.0 723.0L935.5 723.0L932.5 736.0L927.0 736.0Z" fill="#bfc6da"/>
<ellipse cx="930.3" cy="736.8" rx="4.5" ry="2" fill="#dde1ec"/>
<path d="M947.5 721.0L965.0 721.0L962.0 733.0Q962.0 736.0 956.3 736.5Q950.5 736.0 950.5 733.0Z" fill="#9ba4c0"/>
<path d="M950.5 721.0L961.0 721.0L958.5 732.0L953.0 732.0Z" fill="#bfc6da"/>
<ellipse cx="956.3" cy="732.8" rx="4.5" ry="2" fill="#dde1ec"/>
<path d="M983.9 719.0L1003.4 719.0L999.4 735.6Q999.4 738.6 993.6 739.1Q987.9 738.6 987.9 735.6Z" fill="#9ba4c0"/>
<path d="M986.9 719.0L999.4 719.0L995.9 734.6L990.4 734.6Z" fill="#bfc6da"/>
<ellipse cx="993.6" cy="735.4" rx="4.5" ry="2" fill="#dde1ec"/>
<path d="M1001.2 717.0L1014.8 717.0L1012.8 726.7Q1012.8 729.7 1008.0 730.2Q1003.2 729.7 1003.2 726.7Z" fill="#9ba4c0"/>
<path d="M1004.2 717.0L1010.8 717.0L1009.2 725.7L1005.8 725.7Z" fill="#bfc6da"/>
<ellipse cx="1008.0" cy="726.5" rx="3.5" ry="2" fill="#dde1ec"/>
<path d="M1035.2 713.0L1052.7 713.0L1049.7 727.5Q1049.7 730.5 1043.9 731.0Q1038.2 730.5 1038.2 727.5Z" fill="#9ba4c0"/>
<path d="M1038.2 713.0L1048.7 713.0L1046.2 726.5L1040.7 726.5Z" fill="#bfc6da"/>
<ellipse cx="1043.9" cy="727.3" rx="4.5" ry="2" fill="#dde1ec"/>
<path d="M1051.2 708.0L1062.7 708.0L1061.2 715.5Q1061.2 718.5 1056.9 719.0Q1052.7 718.5 1052.7 715.5Z" fill="#9ba4c0"/>
<path d="M1054.2 708.0L1058.7 708.0L1057.7 714.5L1055.2 714.5Z" fill="#bfc6da"/>
<ellipse cx="1056.9" cy="715.3" rx="3.0" ry="2" fill="#dde1ec"/>
<path d="M566.2 722.0C570.3 721.5 582.5 727.1 590.6 729.8C598.7 732.4 605.5 735.2 614.9 737.9C624.3 740.6 636.5 743.7 647.3 746.0C658.1 748.3 669.0 750.1 679.8 751.7C690.6 753.3 701.4 754.5 712.2 755.7C723.0 756.9 733.9 758.3 744.7 759.0C755.5 759.7 767.9 760.0 777.1 759.8C786.3 759.6 800.0 757.4 800.0 758.0C800.0 758.6 786.3 762.1 777.1 763.2C767.9 764.4 758.2 764.4 744.7 764.9C731.2 765.4 710.9 766.8 696.0 766.5C681.1 766.2 667.6 764.8 655.4 763.2C643.2 761.6 633.8 758.9 623.0 756.7C612.2 754.6 599.3 752.4 590.6 750.3C581.9 748.1 575.1 746.7 571.0 743.8C566.9 740.9 566.8 736.6 566.0 733.0C565.2 729.4 562.1 722.5 566.2 722.0Z" fill="url(#pg)"/>
<path d="M1071.0 688.0C1065.2 687.6 1043.1 696.5 1031.0 699.5C1018.9 702.5 1009.3 704.1 998.5 706.0C987.7 707.9 976.8 709.6 966.0 710.9C955.2 712.2 944.4 712.6 933.6 714.0C922.8 715.4 911.8 716.5 901.0 719.0C890.2 721.5 878.2 725.5 868.7 728.7C859.2 731.9 852.4 734.9 844.3 738.4C836.2 741.9 826.0 746.8 820.0 749.8C814.0 752.8 808.0 756.1 808.0 756.5C808.0 756.9 814.0 754.7 820.0 752.4C826.0 750.1 834.8 745.9 844.3 742.7C853.8 739.5 867.3 735.5 876.8 733.0C886.2 730.5 891.5 729.4 901.0 728.0C910.5 726.6 922.8 725.7 933.6 724.8C944.4 723.9 955.2 723.2 966.0 722.4C976.8 721.6 987.7 721.0 998.5 720.0C1009.3 719.0 1021.6 718.1 1031.0 716.7C1040.4 715.4 1049.2 714.4 1055.0 711.9C1060.8 709.4 1063.3 706.0 1066.0 702.0C1068.7 698.0 1076.8 688.4 1071.0 688.0Z" fill="url(#bg2)"/>
<path d="M566.2 723.3C562.4 720.6 566.2 717.4 567.8 713.6C569.4 709.8 572.2 704.7 576.0 700.6C579.8 696.5 584.1 693.3 590.6 689.2C597.1 685.1 606.5 679.7 614.9 676.2C623.3 672.7 632.8 670.8 640.9 668.1C649.0 665.4 655.8 663.2 663.6 660.0C671.4 656.8 679.8 652.2 687.9 648.7C696.0 645.2 704.1 641.9 712.2 638.9C720.3 635.9 728.5 634.3 736.6 630.8C744.7 627.3 753.6 622.1 760.9 617.8C768.2 613.5 773.9 609.9 780.4 604.9C786.9 599.9 793.4 593.8 800.0 588.0C806.6 582.2 814.0 575.3 820.0 570.0C826.0 564.7 830.8 560.0 836.2 556.0C841.6 552.0 848.9 549.2 852.4 546.2C855.9 543.2 855.0 541.0 857.3 538.0C859.6 535.0 862.8 531.2 866.0 528.0C869.2 524.8 872.8 522.4 876.8 518.7C880.8 515.0 885.8 508.8 889.8 505.7C893.8 502.6 897.5 500.6 901.0 500.0C904.5 499.4 905.4 498.7 910.8 502.4C916.2 506.1 927.1 517.1 933.6 522.0C940.1 526.9 941.7 533.8 949.8 531.6C957.9 529.4 972.5 515.8 982.0 509.0C991.5 502.2 1000.3 494.8 1006.6 491.0C1012.9 487.2 1015.5 486.7 1019.6 486.2C1023.7 485.7 1027.9 486.4 1030.9 487.8C1033.9 489.2 1034.7 489.1 1037.4 494.3C1040.1 499.5 1044.3 510.6 1047.0 518.7C1049.7 526.8 1051.7 534.9 1053.6 543.0C1055.5 551.1 1056.9 559.5 1058.5 567.3C1060.1 575.1 1060.9 582.4 1063.3 590.0C1065.7 597.6 1070.5 605.8 1073.0 612.8C1075.5 619.8 1077.0 626.2 1078.0 632.2C1079.0 638.2 1079.1 642.4 1078.8 648.5C1078.5 654.6 1077.8 661.8 1076.3 668.7C1074.8 675.6 1077.3 684.7 1069.8 689.8C1062.2 694.9 1042.9 696.8 1031.0 699.5C1019.1 702.2 1009.3 704.1 998.5 706.0C987.7 707.9 976.8 709.6 966.0 710.9C955.2 712.2 944.4 712.6 933.6 714.0C922.8 715.4 911.8 716.5 901.0 719.0C890.2 721.5 878.2 725.5 868.7 728.7C859.2 731.9 852.4 734.9 844.3 738.4C836.2 741.9 825.8 746.9 820.0 749.8C814.2 752.7 816.8 754.0 809.6 755.7C802.5 757.4 787.9 759.2 777.1 759.8C766.3 760.3 755.5 759.7 744.7 759.0C733.9 758.3 723.0 756.9 712.2 755.7C701.4 754.5 690.6 753.3 679.8 751.7C669.0 750.1 658.1 748.3 647.3 746.0C636.5 743.7 624.3 740.6 614.9 737.9C605.5 735.2 598.7 732.2 590.6 729.8C582.5 727.4 570.0 726.0 566.2 723.3Z" fill="url(#og)"/>
<path d="M949.8 531.8C952.5 526.1 972.7 517.0 982.2 510.7C991.7 504.4 1000.4 497.1 1006.6 493.7C1012.8 490.2 1015.7 489.6 1019.5 490.0C1023.3 490.4 1027.9 493.4 1029.3 496.0C1030.7 498.6 1030.1 501.1 1027.7 505.7C1025.3 510.3 1019.6 517.8 1014.7 523.5C1009.8 529.2 1003.9 535.9 998.5 539.8C993.1 543.7 987.6 546.2 982.2 547.0C976.8 547.8 971.4 547.1 966.0 544.6C960.6 542.1 947.1 537.4 949.8 531.8Z" fill="#1f79a8"/>
<path d="M1029.3 496.0C1040.6 490.6 1030.1 501.1 1027.7 505.7C1025.3 510.3 1019.6 517.8 1014.7 523.5C1009.8 529.2 1003.9 535.9 998.5 539.8C993.1 543.7 987.6 546.2 982.2 547.0C976.8 547.8 969.7 546.1 966.0 544.6C962.3 543.1 949.5 546.1 960.0 538.0C970.5 529.9 1018.0 501.4 1029.3 496.0Z" fill="#17557e" opacity=".6"/>
<g clip-path="url(#uc)">
<ellipse cx="640" cy="700" rx="70" ry="22" fill="#ff8a68" opacity=".35" transform="rotate(-18 640 700)"/>
<ellipse cx="1062" cy="640" rx="22" ry="75" fill="#e23a20" opacity=".45"/>
<ellipse cx="950" cy="566" rx="80" ry="16" fill="#ff7f58" opacity=".3" transform="rotate(16 950 566)"/>
<path d="M566 724 Q680 752 800 756 Q900 722 1070 690 L1070 676 Q900 706 800 742 Q680 740 566 712Z" fill="#e03a1c" opacity=".35"/>
<path d="M575.0 690.0C578.2 689.9 587.7 690.3 594.0 689.5C600.3 688.7 606.7 687.0 613.0 685.3C619.3 683.5 625.7 680.7 632.0 679.1C638.3 677.5 644.7 676.2 651.0 675.5C657.3 674.9 663.7 675.6 670.0 675.4C676.3 675.2 682.7 675.3 689.0 674.4C695.3 673.4 701.7 671.4 708.0 669.5C714.3 667.7 720.7 665.0 727.0 663.5C733.3 662.0 739.7 661.1 746.0 660.7C752.3 660.2 758.7 660.9 765.0 660.7C771.3 660.4 777.7 660.2 784.0 659.1C790.3 658.1 796.7 656.0 803.0 654.3C809.3 652.7 815.7 650.4 822.0 649.3C828.3 648.3 834.7 648.0 841.0 647.9C847.3 647.8 853.7 649.2 860.0 648.8C866.3 648.3 872.7 646.9 879.0 645.1C885.3 643.2 891.7 640.1 898.0 637.8C904.3 635.4 910.7 632.6 917.0 631.0C923.3 629.3 929.7 628.6 936.0 627.9C942.3 627.1 948.7 627.4 955.0 626.4C961.3 625.4 970.8 622.7 974.0 622.0" stroke="#d8391a" stroke-width="1.500" fill="none" opacity=".5"/>
<path d="M575.0 692.2C578.2 692.1 587.7 692.5 594.0 691.7C600.3 690.9 606.7 689.2 613.0 687.5C619.3 685.7 625.7 682.9 632.0 681.3C638.3 679.7 644.7 678.4 651.0 677.7C657.3 677.1 663.7 677.8 670.0 677.6C676.3 677.4 682.7 677.5 689.0 676.6C695.3 675.6 701.7 673.6 708.0 671.7C714.3 669.9 720.7 667.2 727.0 665.7C733.3 664.2 739.7 663.3 746.0 662.9C752.3 662.4 758.7 663.1 765.0 662.9C771.3 662.6 777.7 662.4 784.0 661.3C790.3 660.3 796.7 658.2 803.0 656.5C809.3 654.9 815.7 652.6 822.0 651.5C828.3 650.5 834.7 650.2 841.0 650.1C847.3 650.0 853.7 651.4 860.0 651.0C866.3 650.5 872.7 649.1 879.0 647.3C885.3 645.4 891.7 642.3 898.0 640.0C904.3 637.6 910.7 634.8 917.0 633.2C923.3 631.5 929.7 630.8 936.0 630.1C942.3 629.3 948.7 629.6 955.0 628.6C961.3 627.6 970.8 624.9 974.0 624.2" stroke="#ff8058" stroke-width="1.200" fill="none" opacity=".45"/>
<path d="M575.0 698.2C578.2 697.8 587.7 696.9 594.0 695.4C600.3 693.9 606.7 691.2 613.0 689.5C619.3 687.7 625.7 685.8 632.0 684.9C638.3 684.0 644.7 684.3 651.0 684.1C657.3 684.0 663.7 684.6 670.0 684.0C676.3 683.4 682.7 682.1 689.0 680.5C695.3 678.9 701.7 676.1 708.0 674.5C714.3 672.8 720.7 671.2 727.0 670.5C733.3 669.8 739.7 670.3 746.0 670.2C752.3 670.0 758.7 670.5 765.0 669.7C771.3 668.9 777.7 667.2 784.0 665.5C790.3 663.9 796.7 661.4 803.0 660.0C809.3 658.7 815.7 657.8 822.0 657.5C828.3 657.2 834.7 658.2 841.0 658.3C847.3 658.4 853.7 659.1 860.0 658.1C866.3 657.0 872.7 654.1 879.0 651.8C885.3 649.5 891.7 646.3 898.0 644.4C904.3 642.5 910.7 641.2 917.0 640.3C923.3 639.4 929.7 639.7 936.0 639.0C942.3 638.2 948.7 637.6 955.0 635.9C961.3 634.3 970.8 630.3 974.0 629.1" stroke="#d8391a" stroke-width="1.500" fill="none" opacity=".5"/>
<path d="M575.0 700.4C578.2 700.0 587.7 699.1 594.0 697.6C600.3 696.1 606.7 693.4 613.0 691.7C619.3 689.9 625.7 688.0 632.0 687.1C638.3 686.2 644.7 686.5 651.0 686.3C657.3 686.2 663.7 686.8 670.0 686.2C676.3 685.6 682.7 684.3 689.0 682.7C695.3 681.1 701.7 678.3 708.0 676.7C714.3 675.0 720.7 673.4 727.0 672.7C733.3 672.0 739.7 672.5 746.0 672.4C752.3 672.2 758.7 672.7 765.0 671.9C771.3 671.1 777.7 669.4 784.0 667.7C790.3 666.1 796.7 663.6 803.0 662.2C809.3 660.9 815.7 660.0 822.0 659.7C828.3 659.4 834.7 660.4 841.0 660.5C847.3 660.6 853.7 661.3 860.0 660.3C866.3 659.2 872.7 656.3 879.0 654.0C885.3 651.7 891.7 648.5 898.0 646.6C904.3 644.7 910.7 643.4 917.0 642.5C923.3 641.6 929.7 641.9 936.0 641.2C942.3 640.4 948.7 639.8 955.0 638.1C961.3 636.5 970.8 632.5 974.0 631.3" stroke="#ff8058" stroke-width="1.200" fill="none" opacity=".45"/>
<path d="M575.0 704.9C578.2 704.1 587.7 701.5 594.0 699.7C600.3 698.0 606.7 695.6 613.0 694.4C619.3 693.2 625.7 692.9 632.0 692.7C638.3 692.5 644.7 693.3 651.0 693.1C657.3 692.8 663.7 692.2 670.0 690.9C676.3 689.6 682.7 687.1 689.0 685.4C695.3 683.6 701.7 681.5 708.0 680.5C714.3 679.5 720.7 679.5 727.0 679.4C733.3 679.2 739.7 680.0 746.0 679.6C752.3 679.2 758.7 678.2 765.0 676.8C771.3 675.4 777.7 672.6 784.0 671.0C790.3 669.4 796.7 667.8 803.0 667.2C809.3 666.6 815.7 667.2 822.0 667.4C828.3 667.5 834.7 668.4 841.0 668.1C847.3 667.8 853.7 667.1 860.0 665.4C866.3 663.7 872.7 660.1 879.0 658.0C885.3 655.9 891.7 653.9 898.0 652.7C904.3 651.6 910.7 651.7 917.0 651.1C923.3 650.5 929.7 650.4 936.0 649.2C942.3 647.9 948.7 645.7 955.0 643.5C961.3 641.3 970.8 637.4 974.0 636.1" stroke="#d8391a" stroke-width="1.500" fill="none" opacity=".5"/>
<path d="M575.0 707.1C578.2 706.3 587.7 703.7 594.0 701.9C600.3 700.2 606.7 697.8 613.0 696.6C619.3 695.4 625.7 695.1 632.0 694.9C638.3 694.7 644.7 695.5 651.0 695.3C657.3 695.0 663.7 694.4 670.0 693.1C676.3 691.8 682.7 689.3 689.0 687.6C695.3 685.8 701.7 683.7 708.0 682.7C714.3 681.7 720.7 681.7 727.0 681.6C733.3 681.4 739.7 682.2 746.0 681.8C752.3 681.4 758.7 680.4 765.0 679.0C771.3 677.6 777.7 674.8 784.0 673.2C790.3 671.6 796.7 670.0 803.0 669.4C809.3 668.8 815.7 669.4 822.0 669.6C828.3 669.7 834.7 670.6 841.0 670.3C847.3 670.0 853.7 669.3 860.0 667.6C866.3 665.9 872.7 662.3 879.0 660.2C885.3 658.1 891.7 656.1 898.0 654.9C904.3 653.8 910.7 653.9 917.0 653.3C923.3 652.7 929.7 652.6 936.0 651.4C942.3 650.1 948.7 647.9 955.0 645.7C961.3 643.5 970.8 639.6 974.0 638.3" stroke="#ff8058" stroke-width="1.200" fill="none" opacity=".45"/>
<path d="M575.0 709.7C578.2 708.8 587.7 705.4 594.0 704.0C600.3 702.6 606.7 701.6 613.0 701.2C619.3 700.8 625.7 701.6 632.0 701.5C638.3 701.5 644.7 701.6 651.0 700.7C657.3 699.8 663.7 697.7 670.0 696.1C676.3 694.4 682.7 691.8 689.0 690.6C695.3 689.3 701.7 688.7 708.0 688.4C714.3 688.1 720.7 689.1 727.0 688.9C733.3 688.8 739.7 688.6 746.0 687.5C752.3 686.4 758.7 684.1 765.0 682.4C771.3 680.7 777.7 678.2 784.0 677.2C790.3 676.2 796.7 676.2 803.0 676.3C809.3 676.3 815.7 677.5 822.0 677.5C828.3 677.5 834.7 677.2 841.0 676.2C847.3 675.2 853.7 673.3 860.0 671.5C866.3 669.7 872.7 666.7 879.0 665.3C885.3 663.8 891.7 663.5 898.0 662.9C904.3 662.3 910.7 662.6 917.0 661.7C923.3 660.8 929.7 659.3 936.0 657.4C942.3 655.5 948.7 652.4 955.0 650.2C961.3 648.1 970.8 645.5 974.0 644.6" stroke="#d8391a" stroke-width="1.500" fill="none" opacity=".5"/>
<path d="M575.0 711.9C578.2 711.0 587.7 707.6 594.0 706.2C600.3 704.8 606.7 703.8 613.0 703.4C619.3 703.0 625.7 703.8 632.0 703.7C638.3 703.7 644.7 703.8 651.0 702.9C657.3 702.0 663.7 699.9 670.0 698.3C676.3 696.6 682.7 694.0 689.0 692.8C695.3 691.5 701.7 690.9 708.0 690.6C714.3 690.3 720.7 691.3 727.0 691.1C733.3 691.0 739.7 690.8 746.0 689.7C752.3 688.6 758.7 686.3 765.0 684.6C771.3 682.9 777.7 680.4 784.0 679.4C790.3 678.4 796.7 678.4 803.0 678.5C809.3 678.5 815.7 679.7 822.0 679.7C828.3 679.7 834.7 679.4 841.0 678.4C847.3 677.4 853.7 675.5 860.0 673.7C866.3 671.9 872.7 668.9 879.0 667.5C885.3 666.0 891.7 665.7 898.0 665.1C904.3 664.5 910.7 664.8 917.0 663.9C923.3 663.0 929.7 661.5 936.0 659.6C942.3 657.7 948.7 654.6 955.0 652.4C961.3 650.3 970.8 647.7 974.0 646.8" stroke="#ff8058" stroke-width="1.200" fill="none" opacity=".45"/>
<path d="M575.0 713.6C578.2 713.0 587.7 710.4 594.0 709.8C600.3 709.1 606.7 709.6 613.0 709.6C619.3 709.6 625.7 710.3 632.0 709.8C638.3 709.2 644.7 707.9 651.0 706.4C657.3 704.9 663.7 702.2 670.0 700.7C676.3 699.3 682.7 698.0 689.0 697.5C695.3 697.0 701.7 697.7 708.0 697.7C714.3 697.7 720.7 698.2 727.0 697.5C733.3 696.8 739.7 695.0 746.0 693.4C752.3 691.9 758.7 689.3 765.0 687.9C771.3 686.6 777.7 685.6 784.0 685.3C790.3 685.1 796.7 686.2 803.0 686.4C809.3 686.5 815.7 687.0 822.0 686.3C828.3 685.7 834.7 683.9 841.0 682.5C847.3 681.1 853.7 679.3 860.0 678.0C866.3 676.6 872.7 675.3 879.0 674.5C885.3 673.8 891.7 674.3 898.0 673.7C904.3 673.0 910.7 672.3 917.0 670.8C923.3 669.2 929.7 666.4 936.0 664.2C942.3 662.0 948.7 659.3 955.0 657.7C961.3 656.2 970.8 655.4 974.0 655.0" stroke="#d8391a" stroke-width="1.500" fill="none" opacity=".5"/>
<path d="M575.0 715.8C578.2 715.2 587.7 712.6 594.0 712.0C600.3 711.3 606.7 711.8 613.0 711.8C619.3 711.8 625.7 712.5 632.0 712.0C638.3 711.4 644.7 710.1 651.0 708.6C657.3 707.1 663.7 704.4 670.0 702.9C676.3 701.5 682.7 700.2 689.0 699.7C695.3 699.2 701.7 699.9 708.0 699.9C714.3 699.9 720.7 700.4 727.0 699.7C733.3 699.0 739.7 697.2 746.0 695.6C752.3 694.1 758.7 691.5 765.0 690.1C771.3 688.8 777.7 687.8 784.0 687.5C790.3 687.3 796.7 688.4 803.0 688.6C809.3 688.7 815.7 689.2 822.0 688.5C828.3 687.9 834.7 686.1 841.0 684.7C847.3 683.3 853.7 681.5 860.0 680.2C866.3 678.8 872.7 677.5 879.0 676.7C885.3 676.0 891.7 676.5 898.0 675.9C904.3 675.2 910.7 674.5 917.0 673.0C923.3 671.4 929.7 668.6 936.0 666.4C942.3 664.2 948.7 661.5 955.0 659.9C961.3 658.4 970.8 657.6 974.0 657.2" stroke="#ff8058" stroke-width="1.200" fill="none" opacity=".45"/>
<path d="M575.0 718.5C578.2 718.3 587.7 717.5 594.0 717.4C600.3 717.4 606.7 718.4 613.0 718.2C619.3 718.0 625.7 717.4 632.0 716.2C638.3 715.0 644.7 712.5 651.0 710.9C657.3 709.3 663.7 707.4 670.0 706.7C676.3 705.9 682.7 706.2 689.0 706.2C695.3 706.2 701.7 707.1 708.0 706.8C714.3 706.4 720.7 705.4 727.0 704.1C733.3 702.7 739.7 700.1 746.0 698.6C752.3 697.1 758.7 695.6 765.0 695.0C771.3 694.4 777.7 694.9 784.0 695.0C790.3 695.2 796.7 696.1 803.0 695.8C809.3 695.5 815.7 694.4 822.0 693.2C828.3 692.0 834.7 689.6 841.0 688.5C847.3 687.3 853.7 686.8 860.0 686.2C866.3 685.7 872.7 685.6 879.0 685.1C885.3 684.7 891.7 684.6 898.0 683.4C904.3 682.2 910.7 680.0 917.0 677.9C923.3 675.8 929.7 672.8 936.0 671.0C942.3 669.2 948.7 667.9 955.0 667.2C961.3 666.4 970.8 666.5 974.0 666.3" stroke="#d8391a" stroke-width="1.500" fill="none" opacity=".5"/>
<path d="M575.0 720.7C578.2 720.5 587.7 719.7 594.0 719.6C600.3 719.6 606.7 720.6 613.0 720.4C619.3 720.2 625.7 719.6 632.0 718.4C638.3 717.2 644.7 714.7 651.0 713.1C657.3 711.5 663.7 709.6 670.0 708.9C676.3 708.1 682.7 708.4 689.0 708.4C695.3 708.4 701.7 709.3 708.0 709.0C714.3 708.6 720.7 707.6 727.0 706.3C733.3 704.9 739.7 702.3 746.0 700.8C752.3 699.3 758.7 697.8 765.0 697.2C771.3 696.6 777.7 697.1 784.0 697.2C790.3 697.4 796.7 698.3 803.0 698.0C809.3 697.7 815.7 696.6 822.0 695.4C828.3 694.2 834.7 691.8 841.0 690.7C847.3 689.5 853.7 689.0 860.0 688.4C866.3 687.9 872.7 687.8 879.0 687.3C885.3 686.9 891.7 686.8 898.0 685.6C904.3 684.4 910.7 682.2 917.0 680.1C923.3 678.0 929.7 675.0 936.0 673.2C942.3 671.4 948.7 670.1 955.0 669.4C961.3 668.6 970.8 668.7 974.0 668.5" stroke="#ff8058" stroke-width="1.200" fill="none" opacity=".45"/>
<path d="M575.0 725.2C578.2 725.3 587.7 726.0 594.0 726.0C600.3 726.1 606.7 726.2 613.0 725.4C619.3 724.5 625.7 722.5 632.0 720.9C638.3 719.3 644.7 717.0 651.0 716.0C657.3 714.9 663.7 714.6 670.0 714.5C676.3 714.5 682.7 715.5 689.0 715.5C695.3 715.4 701.7 715.2 708.0 714.2C714.3 713.1 720.7 710.8 727.0 709.3C733.3 707.7 739.7 705.6 746.0 704.7C752.3 703.9 758.7 703.9 765.0 704.0C771.3 704.0 777.7 704.9 784.0 704.8C790.3 704.7 796.7 704.3 803.0 703.4C809.3 702.4 815.7 700.2 822.0 698.9C828.3 697.7 834.7 696.1 841.0 695.7C847.3 695.2 853.7 696.3 860.0 696.2C866.3 696.2 872.7 696.2 879.0 695.4C885.3 694.5 891.7 693.0 898.0 691.2C904.3 689.4 910.7 686.3 917.0 684.3C923.3 682.4 929.7 680.4 936.0 679.4C942.3 678.4 948.7 678.5 955.0 678.1C961.3 677.7 970.8 677.1 974.0 676.9" stroke="#d8391a" stroke-width="1.500" fill="none" opacity=".5"/>
<path d="M575.0 727.4C578.2 727.5 587.7 728.2 594.0 728.2C600.3 728.3 606.7 728.4 613.0 727.6C619.3 726.7 625.7 724.7 632.0 723.1C638.3 721.5 644.7 719.2 651.0 718.2C657.3 717.1 663.7 716.8 670.0 716.7C676.3 716.7 682.7 717.7 689.0 717.7C695.3 717.6 701.7 717.4 708.0 716.4C714.3 715.3 720.7 713.0 727.0 711.5C733.3 709.9 739.7 707.8 746.0 706.9C752.3 706.1 758.7 706.1 765.0 706.2C771.3 706.2 777.7 707.1 784.0 707.0C790.3 706.9 796.7 706.5 803.0 705.6C809.3 704.6 815.7 702.4 822.0 701.1C828.3 699.9 834.7 698.3 841.0 697.9C847.3 697.4 853.7 698.5 860.0 698.4C866.3 698.4 872.7 698.4 879.0 697.6C885.3 696.7 891.7 695.2 898.0 693.4C904.3 691.6 910.7 688.5 917.0 686.5C923.3 684.6 929.7 682.6 936.0 681.6C942.3 680.6 948.7 680.7 955.0 680.3C961.3 679.9 970.8 679.3 974.0 679.1" stroke="#ff8058" stroke-width="1.200" fill="none" opacity=".45"/>
<path d="M575.0 733.4C578.2 733.5 587.7 734.3 594.0 733.8C600.3 733.4 606.7 732.0 613.0 730.6C619.3 729.1 625.7 726.6 632.0 725.4C638.3 724.1 644.7 723.1 651.0 722.8C657.3 722.5 663.7 723.5 670.0 723.6C676.3 723.8 682.7 724.2 689.0 723.6C695.3 722.9 701.7 721.2 708.0 719.7C714.3 718.2 720.7 715.8 727.0 714.6C733.3 713.5 739.7 712.9 746.0 712.8C752.3 712.7 758.7 713.7 765.0 713.8C771.3 713.9 777.7 713.9 784.0 713.2C790.3 712.4 796.7 710.6 803.0 709.3C809.3 708.0 815.7 706.0 822.0 705.3C828.3 704.6 834.7 704.6 841.0 704.9C847.3 705.1 853.7 706.9 860.0 706.7C866.3 706.6 872.7 705.4 879.0 703.9C885.3 702.4 891.7 699.6 898.0 697.6C904.3 695.6 910.7 693.1 917.0 691.8C923.3 690.4 929.7 690.1 936.0 689.7C942.3 689.3 948.7 689.8 955.0 689.2C961.3 688.5 970.8 686.3 974.0 685.7" stroke="#d8391a" stroke-width="1.500" fill="none" opacity=".5"/>
<path d="M575.0 735.6C578.2 735.7 587.7 736.5 594.0 736.0C600.3 735.6 606.7 734.2 613.0 732.8C619.3 731.3 625.7 728.8 632.0 727.6C638.3 726.3 644.7 725.3 651.0 725.0C657.3 724.7 663.7 725.7 670.0 725.8C676.3 726.0 682.7 726.4 689.0 725.8C695.3 725.1 701.7 723.4 708.0 721.9C714.3 720.4 720.7 718.0 727.0 716.8C733.3 715.7 739.7 715.1 746.0 715.0C752.3 714.9 758.7 715.9 765.0 716.0C771.3 716.1 777.7 716.1 784.0 715.4C790.3 714.6 796.7 712.8 803.0 711.5C809.3 710.2 815.7 708.2 822.0 707.5C828.3 706.8 834.7 706.8 841.0 707.1C847.3 707.3 853.7 709.1 860.0 708.9C866.3 708.8 872.7 707.6 879.0 706.1C885.3 704.6 891.7 701.8 898.0 699.8C904.3 697.8 910.7 695.3 917.0 694.0C923.3 692.6 929.7 692.3 936.0 691.9C942.3 691.5 948.7 692.0 955.0 691.4C961.3 690.7 970.8 688.5 974.0 687.9" stroke="#ff8058" stroke-width="1.200" fill="none" opacity=".45"/>
<path d="M575.0 741.7C578.2 741.3 587.7 740.9 594.0 739.7C600.3 738.6 606.7 736.2 613.0 734.8C619.3 733.4 625.7 731.8 632.0 731.2C638.3 730.7 644.7 731.3 651.0 731.4C657.3 731.6 663.7 732.6 670.0 732.3C676.3 732.0 682.7 731.0 689.0 729.7C695.3 728.4 701.7 725.9 708.0 724.6C714.3 723.3 720.7 722.0 727.0 721.7C733.3 721.3 739.7 722.1 746.0 722.3C752.3 722.5 758.7 723.3 765.0 722.8C771.3 722.3 777.7 720.8 784.0 719.5C790.3 718.3 796.7 716.0 803.0 715.0C809.3 714.0 815.7 713.5 822.0 713.5C828.3 713.5 834.7 714.8 841.0 715.2C847.3 715.7 853.7 716.8 860.0 716.0C866.3 715.2 872.7 712.6 879.0 710.6C885.3 708.7 891.7 705.8 898.0 704.2C904.3 702.7 910.7 701.7 917.0 701.1C923.3 700.5 929.7 701.2 936.0 700.8C942.3 700.4 948.7 700.0 955.0 698.7C961.3 697.3 970.8 693.8 974.0 692.8" stroke="#d8391a" stroke-width="1.500" fill="none" opacity=".5"/>
<path d="M575.0 743.9C578.2 743.5 587.7 743.1 594.0 741.9C600.3 740.8 606.7 738.4 613.0 737.0C619.3 735.6 625.7 734.0 632.0 733.4C638.3 732.9 644.7 733.5 651.0 733.6C657.3 733.8 663.7 734.8 670.0 734.5C676.3 734.2 682.7 733.2 689.0 731.9C695.3 730.6 701.7 728.1 708.0 726.8C714.3 725.5 720.7 724.2 727.0 723.9C733.3 723.5 739.7 724.3 746.0 724.5C752.3 724.7 758.7 725.5 765.0 725.0C771.3 724.5 777.7 723.0 784.0 721.7C790.3 720.5 796.7 718.2 803.0 717.2C809.3 716.2 815.7 715.7 822.0 715.7C828.3 715.7 834.7 717.0 841.0 717.4C847.3 717.9 853.7 719.0 860.0 718.2C866.3 717.4 872.7 714.8 879.0 712.8C885.3 710.9 891.7 708.0 898.0 706.4C904.3 704.9 910.7 703.9 917.0 703.3C923.3 702.7 929.7 703.4 936.0 703.0C942.3 702.6 948.7 702.2 955.0 700.9C961.3 699.5 970.8 696.0 974.0 695.0" stroke="#ff8058" stroke-width="1.200" fill="none" opacity=".45"/>
<path d="M575.0 748.3C578.2 747.6 587.7 745.5 594.0 744.1C600.3 742.6 606.7 740.6 613.0 739.7C619.3 738.9 625.7 738.9 632.0 739.0C638.3 739.1 644.7 740.3 651.0 740.4C657.3 740.4 663.7 740.1 670.0 739.1C676.3 738.2 682.7 735.9 689.0 734.5C695.3 733.1 701.7 731.3 708.0 730.6C714.3 730.0 720.7 730.4 727.0 730.5C733.3 730.7 739.7 731.9 746.0 731.7C752.3 731.6 758.7 731.0 765.0 729.9C771.3 728.7 777.7 726.3 784.0 725.0C790.3 723.7 796.7 722.5 803.0 722.2C809.3 721.9 815.7 722.9 822.0 723.4C828.3 723.9 834.7 725.1 841.0 725.1C847.3 725.1 853.7 724.7 860.0 723.3C866.3 721.9 872.7 718.6 879.0 716.8C885.3 715.0 891.7 713.4 898.0 712.6C904.3 711.8 910.7 712.2 917.0 711.9C923.3 711.7 929.7 711.9 936.0 710.9C942.3 710.0 948.7 708.1 955.0 706.2C961.3 704.4 970.8 700.9 974.0 699.8" stroke="#d8391a" stroke-width="1.500" fill="none" opacity=".5"/>
<path d="M575.0 750.5C578.2 749.8 587.7 747.7 594.0 746.3C600.3 744.8 606.7 742.8 613.0 741.9C619.3 741.1 625.7 741.1 632.0 741.2C638.3 741.3 644.7 742.5 651.0 742.6C657.3 742.6 663.7 742.3 670.0 741.3C676.3 740.4 682.7 738.1 689.0 736.7C695.3 735.3 701.7 733.5 708.0 732.8C714.3 732.2 720.7 732.6 727.0 732.7C733.3 732.9 739.7 734.1 746.0 733.9C752.3 733.8 758.7 733.2 765.0 732.1C771.3 730.9 777.7 728.5 784.0 727.2C790.3 725.9 796.7 724.7 803.0 724.4C809.3 724.1 815.7 725.1 822.0 725.6C828.3 726.1 834.7 727.3 841.0 727.3C847.3 727.3 853.7 726.9 860.0 725.5C866.3 724.1 872.7 720.8 879.0 719.0C885.3 717.2 891.7 715.6 898.0 714.8C904.3 714.0 910.7 714.4 917.0 714.1C923.3 713.9 929.7 714.1 936.0 713.1C942.3 712.2 948.7 710.3 955.0 708.4C961.3 706.6 970.8 703.1 974.0 702.0" stroke="#ff8058" stroke-width="1.200" fill="none" opacity=".45"/>
<path d="M575.0 753.1C578.2 752.3 587.7 749.4 594.0 748.3C600.3 747.3 606.7 746.6 613.0 746.5C619.3 746.5 625.7 747.6 632.0 747.9C638.3 748.1 644.7 748.6 651.0 748.0C657.3 747.4 663.7 745.6 670.0 744.2C676.3 742.9 682.7 740.7 689.0 739.7C695.3 738.8 701.7 738.6 708.0 738.6C714.3 738.7 720.7 739.9 727.0 740.1C733.3 740.3 739.7 740.4 746.0 739.6C752.3 738.8 758.7 736.8 765.0 735.4C771.3 734.0 777.7 731.9 784.0 731.2C790.3 730.6 796.7 730.9 803.0 731.3C809.3 731.7 815.7 733.2 822.0 733.5C828.3 733.8 834.7 733.8 841.0 733.1C847.3 732.4 853.7 730.8 860.0 729.3C866.3 727.9 872.7 725.2 879.0 724.2C885.3 723.1 891.7 723.0 898.0 722.8C904.3 722.5 910.7 723.2 917.0 722.6C923.3 722.0 929.7 720.8 936.0 719.2C942.3 717.6 948.7 714.7 955.0 712.9C961.3 711.1 970.8 709.1 974.0 708.3" stroke="#d8391a" stroke-width="1.500" fill="none" opacity=".5"/>
<path d="M575.0 755.3C578.2 754.5 587.7 751.6 594.0 750.5C600.3 749.5 606.7 748.8 613.0 748.7C619.3 748.7 625.7 749.8 632.0 750.1C638.3 750.3 644.7 750.8 651.0 750.2C657.3 749.6 663.7 747.8 670.0 746.4C676.3 745.1 682.7 742.9 689.0 741.9C695.3 741.0 701.7 740.8 708.0 740.8C714.3 740.9 720.7 742.1 727.0 742.3C733.3 742.5 739.7 742.6 746.0 741.8C752.3 741.0 758.7 739.0 765.0 737.6C771.3 736.2 777.7 734.1 784.0 733.4C790.3 732.8 796.7 733.1 803.0 733.5C809.3 733.9 815.7 735.4 822.0 735.7C828.3 736.0 834.7 736.0 841.0 735.3C847.3 734.6 853.7 733.0 860.0 731.5C866.3 730.1 872.7 727.4 879.0 726.4C885.3 725.3 891.7 725.2 898.0 725.0C904.3 724.7 910.7 725.4 917.0 724.8C923.3 724.2 929.7 723.0 936.0 721.4C942.3 719.8 948.7 716.9 955.0 715.1C961.3 713.3 970.8 711.3 974.0 710.5" stroke="#ff8058" stroke-width="1.200" fill="none" opacity=".45"/>
<path d="M981.0 712.0C981.8 708.3 984.8 697.3 986.0 690.0C987.2 682.7 986.8 675.0 988.0 668.0C989.2 661.0 992.2 654.3 993.0 648.0C993.8 641.7 993.0 633.0 993.0 630.0" stroke="#d8391a" stroke-width="2.200" fill="none" opacity=".5"/>
<path d="M983.5 712.0C984.3 708.3 987.3 697.3 988.5 690.0C989.7 682.7 989.3 675.0 990.5 668.0C991.7 661.0 994.7 654.3 995.5 648.0C996.3 641.7 995.5 633.0 995.5 630.0" stroke="#ff8058" stroke-width="1.400" fill="none" opacity=".45"/>
<path d="M991.5 710.8C992.6 707.3 997.0 697.1 998.2 690.0C999.3 682.9 997.8 675.0 998.5 668.0C999.2 661.0 1001.7 654.3 1002.6 648.0C1003.4 641.7 1003.3 633.0 1003.5 630.0" stroke="#d8391a" stroke-width="2.200" fill="none" opacity=".5"/>
<path d="M994.0 710.8C995.1 707.3 999.5 697.1 1000.7 690.0C1001.8 682.9 1000.3 675.0 1001.0 668.0C1001.7 661.0 1004.2 654.3 1005.1 648.0C1005.9 641.7 1005.8 633.0 1006.0 630.0" stroke="#ff8058" stroke-width="1.400" fill="none" opacity=".45"/>
<path d="M1002.0 709.6C1003.1 706.3 1007.7 696.9 1008.8 690.0C1010.0 683.1 1008.6 675.0 1009.0 668.0C1009.4 661.0 1010.3 654.3 1011.2 648.0C1012.0 641.7 1013.5 633.0 1014.0 630.0" stroke="#d8391a" stroke-width="2.200" fill="none" opacity=".5"/>
<path d="M1004.5 709.6C1005.6 706.3 1010.2 696.9 1011.3 690.0C1012.5 683.1 1011.1 675.0 1011.5 668.0C1011.9 661.0 1012.8 654.3 1013.7 648.0C1014.5 641.7 1016.0 633.0 1016.5 630.0" stroke="#ff8058" stroke-width="1.400" fill="none" opacity=".45"/>
<path d="M1012.5 708.4C1013.4 705.3 1016.6 696.7 1017.8 690.0C1018.9 683.3 1019.0 675.0 1019.5 668.0C1020.0 661.0 1019.7 654.3 1020.5 648.0C1021.4 641.7 1023.8 633.0 1024.5 630.0" stroke="#d8391a" stroke-width="2.200" fill="none" opacity=".5"/>
<path d="M1015.0 708.4C1015.9 705.3 1019.1 696.7 1020.3 690.0C1021.4 683.3 1021.5 675.0 1022.0 668.0C1022.5 661.0 1022.2 654.3 1023.0 648.0C1023.9 641.7 1026.3 633.0 1027.0 630.0" stroke="#ff8058" stroke-width="1.400" fill="none" opacity=".45"/>
<path d="M1023.0 707.2C1023.6 704.3 1025.3 696.5 1026.5 690.0C1027.7 683.5 1029.1 675.0 1030.0 668.0C1030.9 661.0 1030.9 654.3 1031.7 648.0C1032.5 641.7 1034.4 633.0 1035.0 630.0" stroke="#d8391a" stroke-width="2.200" fill="none" opacity=".5"/>
<path d="M1025.5 707.2C1026.1 704.3 1027.8 696.5 1029.0 690.0C1030.2 683.5 1031.6 675.0 1032.5 668.0C1033.4 661.0 1033.4 654.3 1034.2 648.0C1035.0 641.7 1036.9 633.0 1037.5 630.0" stroke="#ff8058" stroke-width="1.400" fill="none" opacity=".45"/>
<path d="M1033.5 706.0C1034.0 703.3 1035.4 696.3 1036.6 690.0C1037.7 683.7 1039.3 675.0 1040.5 668.0C1041.7 661.0 1043.2 654.3 1044.1 648.0C1044.9 641.7 1045.3 633.0 1045.5 630.0" stroke="#d8391a" stroke-width="2.200" fill="none" opacity=".5"/>
<path d="M1036.0 706.0C1036.5 703.3 1037.9 696.3 1039.1 690.0C1040.2 683.7 1041.8 675.0 1043.0 668.0C1044.2 661.0 1045.7 654.3 1046.6 648.0C1047.4 641.7 1047.8 633.0 1048.0 630.0" stroke="#ff8058" stroke-width="1.400" fill="none" opacity=".45"/>
<path d="M1044.0 704.8C1044.7 702.3 1047.3 696.1 1048.4 690.0C1049.6 683.9 1049.8 675.0 1051.0 668.0C1052.2 661.0 1055.1 654.3 1055.9 648.0C1056.8 641.7 1056.0 633.0 1056.0 630.0" stroke="#d8391a" stroke-width="2.200" fill="none" opacity=".5"/>
<path d="M1046.5 704.8C1047.2 702.3 1049.8 696.1 1050.9 690.0C1052.1 683.9 1052.3 675.0 1053.5 668.0C1054.7 661.0 1057.6 654.3 1058.4 648.0C1059.3 641.7 1058.5 633.0 1058.5 630.0" stroke="#ff8058" stroke-width="1.400" fill="none" opacity=".45"/>
<path d="M1054.5 703.6C1055.6 701.3 1059.6 695.9 1060.8 690.0C1062.0 684.1 1060.6 675.0 1061.5 668.0C1062.4 661.0 1065.2 654.3 1066.0 648.0C1066.8 641.7 1066.4 633.0 1066.5 630.0" stroke="#d8391a" stroke-width="2.200" fill="none" opacity=".5"/>
<path d="M1057.0 703.6C1058.1 701.3 1062.1 695.9 1063.3 690.0C1064.5 684.1 1063.1 675.0 1064.0 668.0C1064.9 661.0 1067.7 654.3 1068.5 648.0C1069.3 641.7 1068.9 633.0 1069.0 630.0" stroke="#ff8058" stroke-width="1.400" fill="none" opacity=".45"/>
<path d="M1065.0 702.4C1066.2 700.3 1070.8 695.7 1072.0 690.0C1073.1 684.3 1071.5 675.0 1072.0 668.0C1072.5 661.0 1073.9 654.3 1074.7 648.0C1075.5 641.7 1076.6 633.0 1077.0 630.0" stroke="#d8391a" stroke-width="2.200" fill="none" opacity=".5"/>
<path d="M1067.5 702.4C1068.7 700.3 1073.3 695.7 1074.5 690.0C1075.6 684.3 1074.0 675.0 1074.5 668.0C1075.0 661.0 1076.4 654.3 1077.2 648.0C1078.0 641.7 1079.1 633.0 1079.5 630.0" stroke="#ff8058" stroke-width="1.400" fill="none" opacity=".45"/>
<path d="M893.0 512.0C898.3 516.0 913.0 528.7 925.0 536.0C937.0 543.3 950.8 551.0 965.0 556.0C979.2 561.0 995.8 565.3 1010.0 566.0C1024.2 566.7 1043.3 561.0 1050.0 560.0" stroke="#dc3d1d" stroke-width="1.300" fill="none" opacity=".5"/>
<path d="M893.8 516.2C899.2 520.2 914.3 532.9 926.3 540.2C938.3 547.5 951.9 555.0 965.8 559.8C979.8 564.6 996.0 568.3 1010.0 568.9C1024.0 569.5 1043.3 564.3 1050.0 563.4" stroke="#dc3d1d" stroke-width="1.300" fill="none" opacity=".5"/>
<path d="M894.7 520.4C900.2 524.4 915.5 537.2 927.5 544.4C939.5 551.6 952.9 559.0 966.7 563.6C980.4 568.1 996.1 571.4 1010.0 571.9C1023.9 572.4 1043.3 567.6 1050.0 566.7" stroke="#dc3d1d" stroke-width="1.300" fill="none" opacity=".5"/>
<path d="M895.5 524.6C901.1 528.6 916.8 541.5 928.8 548.6C940.8 555.7 954.0 563.0 967.5 567.3C981.1 571.7 996.3 574.4 1010.0 574.8C1023.7 575.3 1043.3 570.9 1050.0 570.1" stroke="#dc3d1d" stroke-width="1.300" fill="none" opacity=".5"/>
<path d="M896.4 528.8C902.0 532.8 918.0 545.7 930.0 552.8C942.0 559.9 955.0 567.0 968.4 571.1C981.7 575.3 996.4 577.4 1010.0 577.8C1023.6 578.1 1043.3 574.2 1050.0 573.4" stroke="#dc3d1d" stroke-width="1.300" fill="none" opacity=".5"/>
<path d="M897.2 533.0C902.9 537.0 919.3 550.0 931.3 557.0C943.3 564.0 956.1 570.9 969.2 574.9C982.3 578.9 996.5 580.4 1010.0 580.7C1023.5 581.0 1043.3 577.4 1050.0 576.8" stroke="#dc3d1d" stroke-width="1.300" fill="none" opacity=".5"/>
<path d="M898.0 537.2C903.8 541.2 920.6 554.3 932.6 561.2C944.6 568.1 957.1 574.9 970.0 578.7C982.9 582.4 996.7 583.4 1010.0 583.6C1023.3 583.9 1043.3 580.7 1050.0 580.2" stroke="#dc3d1d" stroke-width="1.300" fill="none" opacity=".5"/>
<path d="M729.7 650.9C737.8 643.3 778.4 631.9 801.1 624.9C823.8 617.9 839.0 612.2 866.0 608.7C893.0 605.2 944.4 600.6 963.3 603.8C982.3 607.0 977.9 619.2 979.6 628.1C981.2 637.1 982.5 649.8 973.1 657.3C963.6 664.9 936.6 669.8 922.8 673.6C909.0 677.3 903.1 679.2 890.3 680.1C877.6 680.9 862.8 679.0 846.5 678.4C830.3 677.9 808.7 678.2 793.0 676.8C777.3 675.5 763.0 674.6 752.4 670.3C741.9 666.0 721.6 658.4 729.7 650.9Z" fill="#f8633a" opacity=".92"/>
<ellipse cx="744.3" cy="653.3" rx="2.600" ry="3" fill="#1b2338" transform="rotate(-30 744.3 653.3)"/>
<ellipse cx="765.4" cy="663.8" rx="2.600" ry="3" fill="#1b2338" transform="rotate(-30 765.4 663.8)"/>
<ellipse cx="771.9" cy="641.1" rx="2.600" ry="3" fill="#1b2338" transform="rotate(-30 771.9 641.1)"/>
<ellipse cx="780.0" cy="655.7" rx="2.600" ry="3" fill="#1b2338" transform="rotate(-30 780.0 655.7)"/>
<ellipse cx="799.5" cy="670.3" rx="2.600" ry="3" fill="#1b2338" transform="rotate(-30 799.5 670.3)"/>
<ellipse cx="810.9" cy="647.6" rx="2.600" ry="3" fill="#1b2338" transform="rotate(-30 810.9 647.6)"/>
<ellipse cx="815.7" cy="663.8" rx="2.600" ry="3" fill="#1b2338" transform="rotate(-30 815.7 663.8)"/>
<ellipse cx="830.3" cy="660.6" rx="2.600" ry="3" fill="#1b2338" transform="rotate(-30 830.3 660.6)"/>
<ellipse cx="843.3" cy="637.1" rx="2.600" ry="3" fill="#1b2338" transform="rotate(-30 843.3 637.1)"/>
<ellipse cx="848.2" cy="654.1" rx="2.600" ry="3" fill="#1b2338" transform="rotate(-30 848.2 654.1)"/>
<ellipse cx="848.2" cy="671.9" rx="2.600" ry="3" fill="#1b2338" transform="rotate(-30 848.2 671.9)"/>
<ellipse cx="861.1" cy="665.5" rx="2.600" ry="3" fill="#1b2338" transform="rotate(-30 861.1 665.5)"/>
<ellipse cx="862.8" cy="648.4" rx="2.600" ry="3" fill="#1b2338" transform="rotate(-30 862.8 648.4)"/>
<ellipse cx="872.5" cy="622.5" rx="2.600" ry="3" fill="#1b2338" transform="rotate(-30 872.5 622.5)"/>
<ellipse cx="875.7" cy="659.0" rx="2.600" ry="3" fill="#1b2338" transform="rotate(-30 875.7 659.0)"/>
<ellipse cx="877.4" cy="641.9" rx="2.600" ry="3" fill="#1b2338" transform="rotate(-30 877.4 641.9)"/>
<ellipse cx="888.7" cy="616.8" rx="2.600" ry="3" fill="#1b2338" transform="rotate(-30 888.7 616.8)"/>
<ellipse cx="890.3" cy="655.7" rx="2.600" ry="3" fill="#1b2338" transform="rotate(-30 890.3 655.7)"/>
<ellipse cx="891.2" cy="635.4" rx="2.600" ry="3" fill="#1b2338" transform="rotate(-30 891.2 635.4)"/>
<ellipse cx="901.7" cy="650.9" rx="2.600" ry="3" fill="#1b2338" transform="rotate(-30 901.7 650.9)"/>
<ellipse cx="898.5" cy="671.9" rx="2.600" ry="3" fill="#1b2338" transform="rotate(-30 898.5 671.9)"/>
<ellipse cx="917.1" cy="664.6" rx="2.600" ry="3" fill="#1b2338" transform="rotate(-30 917.1 664.6)"/>
<ellipse cx="932.5" cy="619.2" rx="2.600" ry="3" fill="#1b2338" transform="rotate(-30 932.5 619.2)"/>
<ellipse cx="934.1" cy="637.9" rx="2.600" ry="3" fill="#1b2338" transform="rotate(-30 934.1 637.9)"/>
<ellipse cx="932.5" cy="657.3" rx="2.600" ry="3" fill="#1b2338" transform="rotate(-30 932.5 657.3)"/>
<ellipse cx="948.7" cy="611.9" rx="2.600" ry="3" fill="#1b2338" transform="rotate(-30 948.7 611.9)"/>
<ellipse cx="950.4" cy="632.2" rx="2.600" ry="3" fill="#1b2338" transform="rotate(-30 950.4 632.2)"/>
<ellipse cx="948.7" cy="652.5" rx="2.600" ry="3" fill="#1b2338" transform="rotate(-30 948.7 652.5)"/>
<ellipse cx="965.0" cy="625.7" rx="2.600" ry="3" fill="#1b2338" transform="rotate(-30 965.0 625.7)"/>
<ellipse cx="965.0" cy="646.8" rx="2.600" ry="3" fill="#1b2338" transform="rotate(-30 965.0 646.8)"/>
<ellipse cx="979.6" cy="636.2" rx="2.600" ry="3" fill="#1b2338" transform="rotate(-30 979.6 636.2)"/>
<path d="M752.4 624.9C756.5 628.1 769.2 637.9 776.8 644.4C784.4 650.9 793.3 659.0 797.9 663.8C802.5 668.7 803.3 671.9 804.4 673.6" stroke="#cf3a1b" stroke-width="8" fill="none" stroke-linecap="round" opacity=".75"/>
<path d="M752.4 624.9C756.5 628.1 769.2 637.9 776.8 644.4C784.4 650.9 793.3 659.0 797.9 663.8C802.5 668.7 803.3 671.9 804.4 673.6" stroke="#f9663d" stroke-width="6" fill="none" stroke-linecap="round"/>
<path d="M781.6 605.4C786.5 609.5 802.2 621.1 810.9 629.8C819.5 638.4 829.8 652.7 833.6 657.3" stroke="#cf3a1b" stroke-width="8" fill="none" stroke-linecap="round" opacity=".75"/>
<path d="M781.6 605.4C786.5 609.5 802.2 621.1 810.9 629.8C819.5 638.4 829.8 652.7 833.6 657.3" stroke="#f9663d" stroke-width="6" fill="none" stroke-linecap="round"/>
<path d="M810.9 584.3C816.3 589.2 834.1 603.5 843.3 613.5C852.5 623.5 862.2 639.2 866.0 644.4" stroke="#cf3a1b" stroke-width="8.5" fill="none" stroke-linecap="round" opacity=".75"/>
<path d="M810.9 584.3C816.3 589.2 834.1 603.5 843.3 613.5C852.5 623.5 862.2 639.2 866.0 644.4" stroke="#f9663d" stroke-width="6.5" fill="none" stroke-linecap="round"/>
<path d="M833.6 573.0C837.6 576.2 850.9 585.7 857.9 592.4C864.9 599.2 872.8 610.0 875.7 613.5" stroke="#cf3a1b" stroke-width="8.5" fill="none" stroke-linecap="round" opacity=".75"/>
<path d="M833.6 573.0C837.6 576.2 850.9 585.7 857.9 592.4C864.9 599.2 872.8 610.0 875.7 613.5" stroke="#f9663d" stroke-width="6.5" fill="none" stroke-linecap="round"/>
<path d="M820.6 581.1C816.0 584.6 803.0 596.0 793.0 602.2C783.0 608.4 770.6 612.7 760.6 618.4C750.6 624.1 737.6 633.3 733.0 636.2" stroke="#cf3a1b" stroke-width="8" fill="none" stroke-linecap="round" opacity=".75"/>
<path d="M820.6 581.1C816.0 584.6 803.0 596.0 793.0 602.2C783.0 608.4 770.6 612.7 760.6 618.4C750.6 624.1 737.6 633.3 733.0 636.2" stroke="#f9663d" stroke-width="6" fill="none" stroke-linecap="round"/>
<path d="M853.0 561.6C848.4 565.7 834.6 579.2 825.5 586.0C816.3 592.7 802.5 599.5 797.9 602.2" stroke="#cf3a1b" stroke-width="8" fill="none" stroke-linecap="round" opacity=".75"/>
<path d="M853.0 561.6C848.4 565.7 834.6 579.2 825.5 586.0C816.3 592.7 802.5 599.5 797.9 602.2" stroke="#f9663d" stroke-width="6" fill="none" stroke-linecap="round"/>
<path d="M898.5 568.1C903.9 571.4 920.1 581.1 930.9 587.6C941.7 594.1 954.2 601.4 963.3 607.0C972.5 612.7 982.3 619.2 986.1 621.6" stroke="#cf3a1b" stroke-width="9.5" fill="none" stroke-linecap="round" opacity=".75"/>
<path d="M898.5 568.1C903.9 571.4 920.1 581.1 930.9 587.6C941.7 594.1 954.2 601.4 963.3 607.0C972.5 612.7 982.3 619.2 986.1 621.6" stroke="#f9663d" stroke-width="7.5" fill="none" stroke-linecap="round"/>
<path d="M874.1 550.3C876.8 554.6 886.3 567.8 890.3 576.2C894.4 584.6 895.8 592.4 898.5 600.6C901.2 608.7 904.4 616.8 906.6 624.9C908.7 633.0 911.2 642.5 911.4 649.2C911.7 656.0 910.1 661.7 908.2 665.5C906.3 669.2 901.4 670.9 900.1 671.9" stroke="#cf3a1b" stroke-width="10.5" fill="none" stroke-linecap="round" opacity=".75"/>
<path d="M874.1 550.3C876.8 554.6 886.3 567.8 890.3 576.2C894.4 584.6 895.8 592.4 898.5 600.6C901.2 608.7 904.4 616.8 906.6 624.9C908.7 633.0 911.2 642.5 911.4 649.2C911.7 656.0 910.1 661.7 908.2 665.5C906.3 669.2 901.4 670.9 900.1 671.9" stroke="#f9663d" stroke-width="8.5" fill="none" stroke-linecap="round"/>
</g>
<path d="M875.0 518.0C880.1 514.2 894.2 512.7 896.0 515.4C897.8 518.1 889.8 529.7 886.0 534.0C882.2 538.3 876.9 540.7 873.5 541.4C870.1 542.1 865.1 541.9 865.4 538.0C865.6 534.1 869.9 521.8 875.0 518.0Z" fill="#1d78aa"/>
</svg>
<svg class="abs" style="left:355.00px;top:321.00px" width="24.0" height="24.0" viewBox="0 0 24 24" ><path fill="#ffffff" d="M20 2H4c-1.1 0-2 .9-2 2v16c0 1.1.9 2 2 2h16c1.1 0 2-.9 2-2V4c0-1.1-.9-2-2-2zM8 20H4v-4h4v4zm0-6H4v-4h4v4zm0-6H4V4h4v4zm6 12h-4v-4h4v4zm0-6h-4v-4h4v4zm0-6h-4V4h4v4zm6 12h-4v-4h4v4zm0-6h-4v-4h4v4zm0-6h-4V4h4v4z"/></svg>
<!-- right panel -->
<div class="abs" style="left:1330px;top:50px;width:396px;height:1236px;background:#484a57"></div>
<svg class="abs" style="left:1458.60px;top:76.00px" width="24.0" height="24.0" viewBox="0 0 24 24" ><path fill="#e4e4e4" d="M21 2H3c-1.1 0-2 .9-2 2v12c0 1.1.9 2 2 2h7l-2 3v1h8v-1l-2-3h7c1.1 0 2-.9 2-2V4c0-1.1-.9-2-2-2zm0 12H3V4h18v10z"/></svg>
<div class="abs" style="left:1340px;top:115px;width:386px;height:39.500px;border-radius:4px 0 0 4px;background:#5c6272"></div>
<div class="abs" style="left:1340px;top:445px;width:386px;height:39.500px;border-radius:4px 0 0 4px;background:#5c6272"></div>
<div class="abs" style="left:1340px;top:595px;width:386px;height:39.500px;border-radius:4px 0 0 4px;background:#5c6272"></div>
<div class="abs" style="left:1330px;top:640px;width:396px;height:39.500px;background:#525665"></div>
<!-- status dots -->
<div class="abs" style="left:1343px;top:173px;width:14px;height:14px;border-radius:50%;background:#92e788"></div>
<div class="abs" style="left:1343px;top:266px;width:14px;height:14px;border-radius:50%;background:#92e788"></div>
<div class="abs" style="left:1343px;top:360px;width:14px;height:14px;border-radius:50%;background:#92e788"></div>
<div class="abs" style="left:1373px;top:498px;width:14px;height:14px;border-radius:50%;background:#92e788"></div>
<!-- separators -->
<div class="abs" style="left:1340px;top:256.500px;width:379px;height:1px;background:#555866"></div>
<div class="abs" style="left:1340px;top:341px;width:379px;height:1px;background:#555866"></div>
<!-- input underlines -->
<div class="abs" style="left:1370px;top:238.500px;width:50px;height:1px;background:#d4d4d8"></div>
<div class="abs" style="left:1370px;top:321.500px;width:50px;height:1px;background:#d4d4d8"></div>
<div class="abs" style="left:1370px;top:424.500px;width:50px;height:1px;background:#d4d4d8"></div>
<div class="abs" style="left:1435px;top:238.500px;width:57px;height:1px;background:repeating-linear-gradient(90deg,#b9bbc4 0 1px,transparent 1px 4px)"></div>
<div class="abs" style="left:1435px;top:321.500px;width:57px;height:1px;background:repeating-linear-gradient(90deg,#b9bbc4 0 1px,transparent 1px 4px)"></div>
<div class="abs" style="left:1454px;top:424.500px;width:57px;height:1px;background:repeating-linear-gradient(90deg,#b9bbc4 0 1px,transparent 1px 4px)"></div>
<!-- dropdown carets -->
<svg class="abs" style="left:1480.500px;top:222.500px" width="11" height="6"><polygon fill="#b9bbc4" points="0.5,0.5 10.500,0.5 5.500,5.500"/></svg>
<svg class="abs" style="left:1480.500px;top:306px" width="11" height="6"><polygon fill="#b9bbc4" points="0.5,0.5 10.500,0.5 5.500,5.500"/></svg>
<svg class="abs" style="left:1499.500px;top:409.500px" width="11" height="6"><polygon fill="#b9bbc4" points="0.5,0.5 10.500,0.5 5.500,5.500"/></svg>
<svg class="abs" style="left:1428px;top:537.500px" width="9" height="5"><polygon fill="#9b9eab" points="0.5,0.5 8.500,0.5 4.500,4.500"/></svg>
<svg class="abs" style="left:1556.500px;top:537.500px" width="9" height="5"><polygon fill="#9b9eab" points="0.5,0.5 8.500,0.5 4.500,4.500"/></svg>
<svg class="abs" style="left:1664px;top:537.500px" width="9" height="5"><polygon fill="#9b9eab" points="0.5,0.5 8.500,0.5 4.500,4.500"/></svg>
<svg class="abs" style="left:1495px;top:567.500px" width="9" height="5"><polygon fill="#9b9eab" points="0.5,0.5 8.500,0.5 4.500,4.500"/></svg>
<svg class="abs" style="left:1685.500px;top:567.500px" width="9" height="5"><polygon fill="#9b9eab" points="0.5,0.5 8.500,0.5 4.500,4.500"/></svg>
<!-- robot controls -->
<svg class="abs" style="left:1503.50px;top:217.50px" width="24.0" height="24.0" viewBox="0 0 24 24" ><path fill="#e4e4e4" d="M15.41 7.41L14 6l-6 6 6 6 1.41-1.41L10.83 12z"/></svg>
<svg class="abs" style="left:1542.50px;top:217.50px" width="24.0" height="24.0" viewBox="0 0 24 24" ><path fill="#e4e4e4" d="M10 6L8.59 7.41 13.17 12l-4.58 4.59L10 18l6-6z"/></svg>
<svg class="abs" style="left:1687.90px;top:217.50px" width="24.0" height="24.0" viewBox="0 0 24 24" ><path fill="#e4e4e4" d="M12 8c-2.21 0-4 1.79-4 4s1.79 4 4 4 4-1.79 4-4-1.79-4-4-4zm8.94 3c-.46-4.17-3.77-7.48-7.94-7.94V1h-2v2.06C6.83 3.52 3.52 6.83 3.06 11H1v2h2.06c.46 4.17 3.77 7.48 7.94 7.94V23h2v-2.06c4.17-.46 7.48-3.77 7.94-7.94H23v-2h-2.06zM12 19c-3.87 0-7-3.13-7-7s3.13-7 7-7 7 3.13 7 7-3.13 7-7 7z"/></svg>
<svg class="abs" style="left:1687.90px;top:301.00px" width="24.0" height="24.0" viewBox="0 0 24 24" ><path fill="#e4e4e4" d="M12 8c-2.21 0-4 1.79-4 4s1.79 4 4 4 4-1.79 4-4-1.79-4-4-4zm8.94 3c-.46-4.17-3.77-7.48-7.94-7.94V1h-2v2.06C6.83 3.52 3.52 6.83 3.06 11H1v2h2.06c.46 4.17 3.77 7.48 7.94 7.94V23h2v-2.06c4.17-.46 7.48-3.77 7.94-7.94H23v-2h-2.06zM12 19c-3.87 0-7-3.13-7-7s3.13-7 7-7 7 3.13 7 7-3.13 7-7 7z"/></svg>
<svg class="abs" style="left:1687.90px;top:404.50px" width="24.0" height="24.0" viewBox="0 0 24 24" ><path fill="#e4e4e4" d="M12 8c-2.21 0-4 1.79-4 4s1.79 4 4 4 4-1.79 4-4-1.79-4-4-4zm8.94 3c-.46-4.17-3.77-7.48-7.94-7.94V1h-2v2.06C6.83 3.52 3.52 6.83 3.06 11H1v2h2.06c.46 4.17 3.77 7.48 7.94 7.94V23h2v-2.06c4.17-.46 7.48-3.77 7.94-7.94H23v-2h-2.06zM12 19c-3.87 0-7-3.13-7-7s3.13-7 7-7 7 3.13 7 7-3.13 7-7 7z"/></svg>
<svg class="abs" style="left:1522.40px;top:405.00px" width="24.0" height="24.0" viewBox="0 0 24 24" ><path fill="#e4e4e4" d="M16.59 8.59L12 13.17 7.41 8.59 6 10l6 6 6-6z"/></svg>
<svg class="abs" style="left:1562.40px;top:405.00px" width="24.0" height="24.0" viewBox="0 0 24 24" ><path fill="#e4e4e4" d="M12 8l-6 6 1.41 1.41L12 10.83l4.59 4.59L18 14z"/></svg>
<svg class="abs" style="left:1608px;top:300px" width="64" height="26" viewBox="1608 300 64 26"><circle cx="1616.800" cy="313.100" r="4.800" fill="#e4e4e4"/><path d="M1620 313.100H1629.600M1626.200 309.600L1629.800 313.100L1626.200 316.600" stroke="#e4e4e4" stroke-width="1.800" fill="none"/><path d="M1662.100 320.900V312.900L1654.900 305.700M1654.700 311.200V305.300H1660.600" stroke="#e4e4e4" stroke-width="1.900" fill="none"/></svg>
<!-- camera row -->
<svg class="abs" style="left:1344.50px;top:495.00px" width="20.0" height="20.0" viewBox="0 0 24 24" ><path fill="#e4e4e4" d="M13 3h-2v10h2V3zm4.83 2.17l-1.42 1.42C17.99 7.86 19 9.81 19 12c0 3.87-3.13 7-7 7s-7-3.13-7-7c0-2.19 1.01-4.14 2.58-5.42L6.17 5.17C4.23 6.82 3 9.26 3 12c0 4.97 4.03 9 9 9s9-4.03 9-9c0-2.74-1.23-5.18-3.17-6.83z"/></svg>
<svg class="abs" style="left:1634.50px;top:495.50px" width="22.0" height="22.0" viewBox="0 0 24 24" ><path fill="#8f92a1" d="M15.67 4H14V2h-4v2H8.33C7.6 4 7 4.6 7 5.33v15.33C7 21.4 7.6 22 8.33 22h7.33c.74 0 1.34-.6 1.34-1.33V5.33C17 4.6 16.4 4 15.67 4z"/></svg>
<svg class="abs" style="left:1687.50px;top:494.00px" width="24.0" height="24.0" viewBox="0 0 24 24" ><path fill="#ececec" d="M21 6h-7.59l3.29-3.29L16 2l-4 4-4-4-.71.71L10.59 6H3c-1.1 0-2 .89-2 2v12c0 1.1.9 2 2 2h18c1.1 0 2-.9 2-2V8c0-1.11-.9-2-2-2zm0 14H3V8h18v12zM9 10v8l7-4z"/></svg>
<svg class="abs" style="left:1376.50px;top:531.50px" width="16.0" height="16.0" viewBox="0 0 24 24" ><path fill="#9b9eab" d="M9.4 10.5l4.77-8.26C13.47 2.09 12.75 2 12 2c-2.4 0-4.6.85-6.32 2.25l3.66 6.35.06-.1zM21.54 9c-.92-2.92-3.15-5.26-6-6.34L11.88 9h9.66zm.26 1h-7.49l.29.5 4.76 8.25C21 16.97 22 14.61 22 12c0-.69-.07-1.35-.2-2zM8.54 12l-3.9-6.75C3.01 7.03 2 9.39 2 12c0 .69.07 1.35.2 2h7.49l-1.15-2zm-6.08 3c.92 2.92 3.15 5.26 6 6.34L12.12 15H2.46zm11.27 0l-3.9 6.76c.7.15 1.42.24 2.17.24 2.4 0 4.6-.85 6.32-2.25l-3.66-6.35-.93 1.6z"/></svg>
<svg class="abs" style="left:1494.50px;top:531.50px" width="16.0" height="16.0" viewBox="0 0 24 24" ><path fill="#9b9eab" d="M15 1H9v2h6V1zm4.03 6.39l1.42-1.42c-.43-.51-.9-.99-1.41-1.41l-1.42 1.42C16.07 4.74 14.12 4 12 4c-4.97 0-9 4.03-9 9s4.02 9 9 9 9-4.03 9-9c0-2.12-.74-4.07-1.97-5.61zM12 20c-3.87 0-7-3.13-7-7s3.13-7 7-7 7 3.13 7 7-3.13 7-7 7zm-.68-12.95L9 11.1 7.4 8.3C8.4 7.5 9.7 7.05 11.32 7.05zM6.7 9.1l2.3 4H6.1c-.2-1.4 0-2.8.6-4zm-.3 5h4.6l-1.6 2.8c-1.4-.5-2.5-1.5-3-2.8zm4 3.2l2.3-4 1.6 2.8c-1.1.9-2.5 1.3-3.9 1.200zm4.700-1.900l-2.300-4h3c.3 1.400.1 2.800-.7 4zm.400-5h-4.600l1.600-2.800c1.400.4 2.500 1.500 3 2.800z"/></svg>
<svg class="abs" style="left:1376.00px;top:561.00px" width="17.0" height="17.0" viewBox="0 0 24 24" ><path fill="#9b9eab" d="M21 15h2v2h-2v-2zm0-4h2v2h-2v-2zm2 8h-2v2c1 0 2-1 2-2zM13 3h2v2h-2V3zm8 4h2v2h-2V7zm0-4v2h2c0-1-1-2-2-2zM1 7h2v2H1V7zm16-4h2v2h-2V3zm0 16h2v2h-2v-2zM3 3C2 3 1 4 1 5h2V3zm6 0h2v2H9V3zM5 3h2v2H5V3zm-4 8v8c0 1.1.9 2 2 2h12V11H1zm2 8l2.500-3.210 1.790 2.150 2.500-3.220L13 19H3z"/></svg>
<svg class="abs" style="left:1615.50px;top:561.00px" width="17.0" height="17.0" viewBox="0 0 24 24" ><path fill="#9b9eab" d="M6.850 12.650h2.300L8 9l-1.150 3.650zM22 7l-1.200 6.290L19.300 7h-1.600l-1.490 6.290L15 7h-.760C12.770 5.170 10.530 4 8 4c-4.420 0-8 3.580-8 8s3.580 8 8 8c3.130 0 5.840-1.810 7.150-4.430l.100.430H17l1.500-6.100L20 16h1.750l2.050-9H22zm-11.700 9l-.700-2H6.400l-.700 2H3.800L7 7h2l3.200 9h-1.900z"/></svg>

<!-- bottom bar -->
<div class="abs" style="left:347px;top:1219px;width:983px;height:67px;background:#484a57"></div>
<div class="abs" style="left:689px;top:1169px;width:300px;height:50px;border-radius:14px 14px 0 0;background:#2a303b"></div>
<svg class="abs" style="left:730px;top:1180px" width="30" height="30" viewBox="730 1180 30 30"><path d="M747.400 1186L738.700 1195L747.400 1204" stroke="#f4f4f4" stroke-width="2.400" fill="none"/></svg>
<svg class="abs" style="left:930px;top:1180px" width="30" height="30" viewBox="930 1180 30 30"><path d="M940.200 1186L949 1195L940.200 1204" stroke="#f4f4f4" stroke-width="2.400" fill="none"/></svg>
<div class="abs" style="left:739px;top:1232px;width:49px;height:49px;border-radius:50%;background:#2a303b;border:2px solid #626779"></div>
<div class="abs" style="left:889px;top:1232px;width:49px;height:49px;border-radius:50%;background:#2a303b;border:2px solid #626779"></div>
<svg class="abs" style="left:901.50px;top:1244.00px" width="24.0" height="24.0" viewBox="0 0 24 24" ><path fill="#9699a6" d="M12 8.800a3.200 3.200 0 1 0 0 6.400a3.200 3.200 0 1 0 0-6.400zM9 2L7.170 4H4c-1.100 0-2 .9-2 2v12c0 1.100.9 2 2 2h16c1.100 0 2-.9 2-2V6c0-1.100-.9-2-2-2h-3.170L15 2H9zm3 15c-2.760 0-5-2.240-5-5s2.240-5 5-5 5 2.240 5 5-2.240 5-5 5z"/></svg>
<div class="abs" style="left:799px;top:1179px;width:80px;height:80px;border-radius:50%;background:#fb6200;box-shadow:0 3px 8px rgba(0,0,0,.3)"></div>
<svg class="abs" style="left:818.60px;top:1199.00px" width="40.0" height="40.0" viewBox="0 0 24 24" ><path fill="#ffffff" d="M8 5v14l11-7z"/></svg>
<div class="abs" style="left:959px;top:1238px;width:118px;height:37px;border-radius:3px;background:#8b8e9b"></div>
<svg class="abs" style="left:975.00px;top:1245.00px" width="23.0" height="23.0" viewBox="0 0 24 24" ><path fill="#4f5361" d="M22 5.180L10.590 16.600l-4.240-4.240 1.410-1.410 2.830 2.830 10-10L22 5.180zM12 20c-4.410 0-8-3.590-8-8s3.590-8 8-8c1.570 0 3.040.46 4.280 1.250l1.450-1.450C16.100 2.670 14.130 2 12 2 6.480 2 2 6.480 2 12s4.480 10 10 10c1.730 0 3.360-.44 4.780-1.220l-1.500-1.500c-1 .46-2.110.72-3.280.72zm7-5h-3v2h3v3h2v-3h3v-2h-3v-3h-2v3z"/></svg>
<!-- right bottom comment box -->
<div class="abs" style="left:1330px;top:1218px;width:396px;height:68px;background:#484a57;box-shadow:0 -1px 3px rgba(0,0,0,.18)"></div>
<div class="abs" style="left:1350px;top:1269px;width:306px;height:1px;background:#d2d3d8"></div>

<span class="t" style="left:47.5px;top:17.75px;font-size:14.5px;font-weight:700;color:#ffffff;transform:scaleX(0.8921);transform-origin:0 50%">PhotoRobot</span>
<span class="t" style="left:57px;top:36.40px;font-size:9.6px;font-weight:400;color:#1f242e;letter-spacing:0.226px;-webkit-text-stroke:.18px #1f242e">Wizard mode</span>
<span class="t" style="left:146px;top:17.50px;font-size:16px;font-weight:700;color:#ff6a00;transform:scaleX(0.9161);transform-origin:0 50%">App</span>
<span class="t" style="left:211px;top:18.00px;font-size:15px;font-weight:400;color:#e4e4e4;letter-spacing:-0.086px;-webkit-text-stroke:.18px #e4e4e4">Projects</span>
<span class="t" style="left:291.5px;top:18.00px;font-size:15px;font-weight:400;color:#ff6a00;letter-spacing:0.062px;-webkit-text-stroke:.18px #ff6a00">Items</span>
<span class="t" style="left:355.5px;top:18.00px;font-size:15px;font-weight:400;color:#e4e4e4;transform:scaleX(0.9648);transform-origin:0 50%;-webkit-text-stroke:.18px #e4e4e4">Scan</span>
<span class="t" style="left:1367.5px;top:17.60px;font-size:14px;font-weight:400;color:#e4e4e4;letter-spacing:-0.007px;-webkit-text-stroke:.18px #e4e4e4">Support</span>
<span class="t" style="left:1516px;top:18.35px;font-size:14.5px;font-weight:400;color:#e4e4e4;transform:scaleX(0.9595);transform-origin:0 50%;-webkit-text-stroke:.45px #e4e4e4">PhotoRobot - unitechnic</span>
<span class="t" style="left:111px;top:60.95px;font-size:18.5px;font-weight:400;color:#dedede;transform:scaleX(0.9566);transform-origin:0 50%;-webkit-text-stroke:.55px #dedede">BK PhotoRobot</span>
<span class="t" style="left:153px;top:107.75px;font-size:16.5px;font-weight:400;color:#dedede;transform:scaleX(0.9044);transform-origin:0 50%;-webkit-text-stroke:.5px #dedede">Car 1</span>
<span class="t" style="left:83px;top:205.55px;font-size:13.5px;font-weight:400;color:#2a303b;letter-spacing:0.484px;-webkit-text-stroke:.45px #2a303b">2</span>
<span class="t" style="left:114.5px;top:204.10px;font-size:15px;font-weight:700;color:#e8e8e8;transform:scaleX(0.8666);transform-origin:0 50%">Capture with door closed</span>
<span class="t" style="left:176.8px;top:283.25px;font-size:14.5px;font-weight:400;color:#e4e4e4;transform:scaleX(0.9664);transform-origin:0 50%;-webkit-text-stroke:.3px #e4e4e4">15&deg;</span>
<span class="t" style="left:55.85px;top:378.00px;font-size:12px;font-weight:400;color:#9a9dab;transform:scaleX(0.8969);transform-origin:0 50%;-webkit-text-stroke:.3px #9a9dab">0&deg;</span>
<span class="t" style="left:158.6px;top:378.00px;font-size:12px;font-weight:400;color:#9a9dab;transform:scaleX(0.9253);transform-origin:0 50%;-webkit-text-stroke:.3px #9a9dab">30&deg;</span>
<span class="t" style="left:264.6px;top:378.00px;font-size:12px;font-weight:400;color:#9a9dab;transform:scaleX(0.9253);transform-origin:0 50%;-webkit-text-stroke:.3px #9a9dab">60&deg;</span>
<span class="t" style="left:52.6px;top:476.00px;font-size:12px;font-weight:400;color:#9a9dab;transform:scaleX(0.9253);transform-origin:0 50%;-webkit-text-stroke:.3px #9a9dab">90&deg;</span>
<span class="t" style="left:155.35px;top:476.00px;font-size:12px;font-weight:400;color:#9a9dab;transform:scaleX(0.9385);transform-origin:0 50%;-webkit-text-stroke:.3px #9a9dab">120&deg;</span>
<span class="t" style="left:261.35px;top:476.00px;font-size:12px;font-weight:400;color:#9a9dab;transform:scaleX(0.9385);transform-origin:0 50%;-webkit-text-stroke:.3px #9a9dab">150&deg;</span>
<span class="t" style="left:49.35px;top:574.00px;font-size:12px;font-weight:400;color:#9a9dab;transform:scaleX(0.9385);transform-origin:0 50%;-webkit-text-stroke:.3px #9a9dab">180&deg;</span>
<span class="t" style="left:155.35px;top:574.00px;font-size:12px;font-weight:400;color:#9a9dab;transform:scaleX(0.9385);transform-origin:0 50%;-webkit-text-stroke:.3px #9a9dab">210&deg;</span>
<span class="t" style="left:261.35px;top:574.00px;font-size:12px;font-weight:400;color:#9a9dab;transform:scaleX(0.9385);transform-origin:0 50%;-webkit-text-stroke:.3px #9a9dab">240&deg;</span>
<span class="t" style="left:49.35px;top:672.00px;font-size:12px;font-weight:400;color:#9a9dab;transform:scaleX(0.9385);transform-origin:0 50%;-webkit-text-stroke:.3px #9a9dab">270&deg;</span>
<span class="t" style="left:155.35px;top:672.00px;font-size:12px;font-weight:400;color:#9a9dab;transform:scaleX(0.9385);transform-origin:0 50%;-webkit-text-stroke:.3px #9a9dab">300&deg;</span>
<span class="t" style="left:261.35px;top:672.00px;font-size:12px;font-weight:400;color:#9a9dab;transform:scaleX(0.9385);transform-origin:0 50%;-webkit-text-stroke:.3px #9a9dab">330&deg;</span>
<span class="t" style="left:357.4px;top:144.00px;font-size:13px;font-weight:400;color:#ffffff;transform:scaleX(0.9736);transform-origin:0 50%;-webkit-text-stroke:.18px #ffffff">1:1</span>
<span class="t" style="left:359px;top:184.00px;font-size:13px;font-weight:400;color:#ffffff;letter-spacing:0.682px;-webkit-text-stroke:.18px #ffffff">Fit</span>
<span class="t" style="left:754.8px;top:80.05px;font-size:16.5px;font-weight:700;color:#ececec;transform:scaleX(0.8838);transform-origin:0 50%">CAPTURE</span>
<span class="t" style="left:872.3px;top:80.25px;font-size:16.5px;font-weight:700;color:#ff6a00;transform:scaleX(0.8672);transform-origin:0 50%">EDIT</span>
<span class="t" style="left:1488px;top:80.60px;font-size:14px;font-weight:400;color:#e4e4e4;letter-spacing:-0.006px;-webkit-text-stroke:.3px #e4e4e4">Virtual Workspace</span>
<span class="t" style="left:1350px;top:127.60px;font-size:14px;font-weight:400;color:#e4e4e4;transform:scaleX(0.8964);transform-origin:0 50%;-webkit-text-stroke:.18px #e4e4e4">ROBOTS</span>
<span class="t" style="left:1350px;top:457.60px;font-size:14px;font-weight:400;color:#e4e4e4;transform:scaleX(0.9316);transform-origin:0 50%;-webkit-text-stroke:.18px #e4e4e4">CAMERAS</span>
<span class="t" style="left:1350px;top:607.60px;font-size:14px;font-weight:400;color:#e4e4e4;transform:scaleX(0.9293);transform-origin:0 50%;-webkit-text-stroke:.18px #e4e4e4">LIGHTS</span>
<span class="t" style="left:1340px;top:653.00px;font-size:14px;font-weight:400;color:#e4e4e4;letter-spacing:0.139px;-webkit-text-stroke:.18px #e4e4e4">All folders</span>
<span class="t" style="left:1365px;top:172.60px;font-size:14px;font-weight:400;color:#e4e4e4;letter-spacing:-0.070px;-webkit-text-stroke:.18px #e4e4e4">Turn</span>
<span class="t" style="left:1365px;top:265.60px;font-size:14px;font-weight:400;color:#e4e4e4;letter-spacing:-0.128px;-webkit-text-stroke:.18px #e4e4e4">Swing</span>
<span class="t" style="left:1365px;top:359.60px;font-size:14px;font-weight:400;color:#e4e4e4;letter-spacing:0.328px;-webkit-text-stroke:.18px #e4e4e4">Lift</span>
<span class="t" style="left:1411.5px;top:217.60px;font-size:14px;font-weight:700;color:#e4e4e4;letter-spacing:0.406px">0 &deg;</span>
<span class="t" style="left:1448px;top:217.60px;font-size:14px;font-weight:700;color:#b9bbc4;transform:scaleX(0.9085);transform-origin:0 50%">50 %</span>
<span class="t" style="left:1404px;top:300.60px;font-size:14px;font-weight:700;color:#e4e4e4;letter-spacing:0.234px">15 &deg;</span>
<span class="t" style="left:1447.5px;top:300.60px;font-size:14px;font-weight:700;color:#b9bbc4;transform:scaleX(0.9241);transform-origin:0 50%">30 %</span>
<span class="t" style="left:1411.5px;top:404.60px;font-size:14px;font-weight:700;color:#e4e4e4;letter-spacing:0.355px">0 mm</span>
<span class="t" style="left:1466.5px;top:404.60px;font-size:14px;font-weight:700;color:#b9bbc4;transform:scaleX(0.9085);transform-origin:0 50%">50 %</span>
<span class="t" style="left:1395px;top:497.60px;font-size:14px;font-weight:400;color:#e4e4e4;letter-spacing:-0.144px;-webkit-text-stroke:.2px #e4e4e4">Virtual Camera 1</span>
<span class="t" style="left:1658px;top:501.05px;font-size:11.5px;font-weight:400;color:#8f92a1;transform:scaleX(0.9335);transform-origin:0 50%;-webkit-text-stroke:.18px #8f92a1">80%</span>
<span class="t" style="left:1399px;top:534.00px;font-size:12px;font-weight:700;color:#e4e4e4;letter-spacing:0.203px">f6.3</span>
<span class="t" style="left:1517.5px;top:534.00px;font-size:12px;font-weight:700;color:#e4e4e4;letter-spacing:0.394px">1/125</span>
<span class="t" style="left:1612px;top:534.30px;font-size:12px;font-weight:400;color:#9b9eab;transform:scaleX(0.8707);transform-origin:0 50%;-webkit-text-stroke:.25px #9b9eab">ISO</span>
<span class="t" style="left:1637px;top:534.00px;font-size:12px;font-weight:700;color:#e4e4e4;letter-spacing:-0.010px">100</span>
<span class="t" style="left:1399px;top:564.00px;font-size:12px;font-weight:700;color:#e4e4e4;transform:scaleX(0.9216);transform-origin:0 50%">Large Fine JPEG</span>
<span class="t" style="left:1638.5px;top:564.00px;font-size:12px;font-weight:700;color:#e4e4e4;transform:scaleX(0.9554);transform-origin:0 50%">Manual</span>
<span class="t" style="left:900px;top:1186.80px;font-size:14px;font-weight:700;color:#f2f2f2;transform:scaleX(0.9717);transform-origin:0 50%">Next</span>
<span class="t" style="left:746.5px;top:1250.00px;font-size:13px;font-weight:700;color:#e0e0e0;transform:scaleX(0.9525);transform-origin:0 50%">STOP</span>
<span class="t" style="left:1002px;top:1249.50px;font-size:14px;font-weight:400;color:#4c505e;letter-spacing:0.080px;-webkit-text-stroke:.55px #4c505e">New item</span>
<span class="t" style="left:1350px;top:1247.25px;font-size:14.5px;font-weight:400;color:#a9abb7;transform:scaleX(0.9703);transform-origin:0 50%;-webkit-text-stroke:.25px #a9abb7">Type a comment</span>
<span class="t" style="left:1676px;top:1250.60px;font-size:14px;font-weight:400;color:#8f92a1;letter-spacing:-0.141px;-webkit-text-stroke:.5px #8f92a1">Add</span>
</body></html>
